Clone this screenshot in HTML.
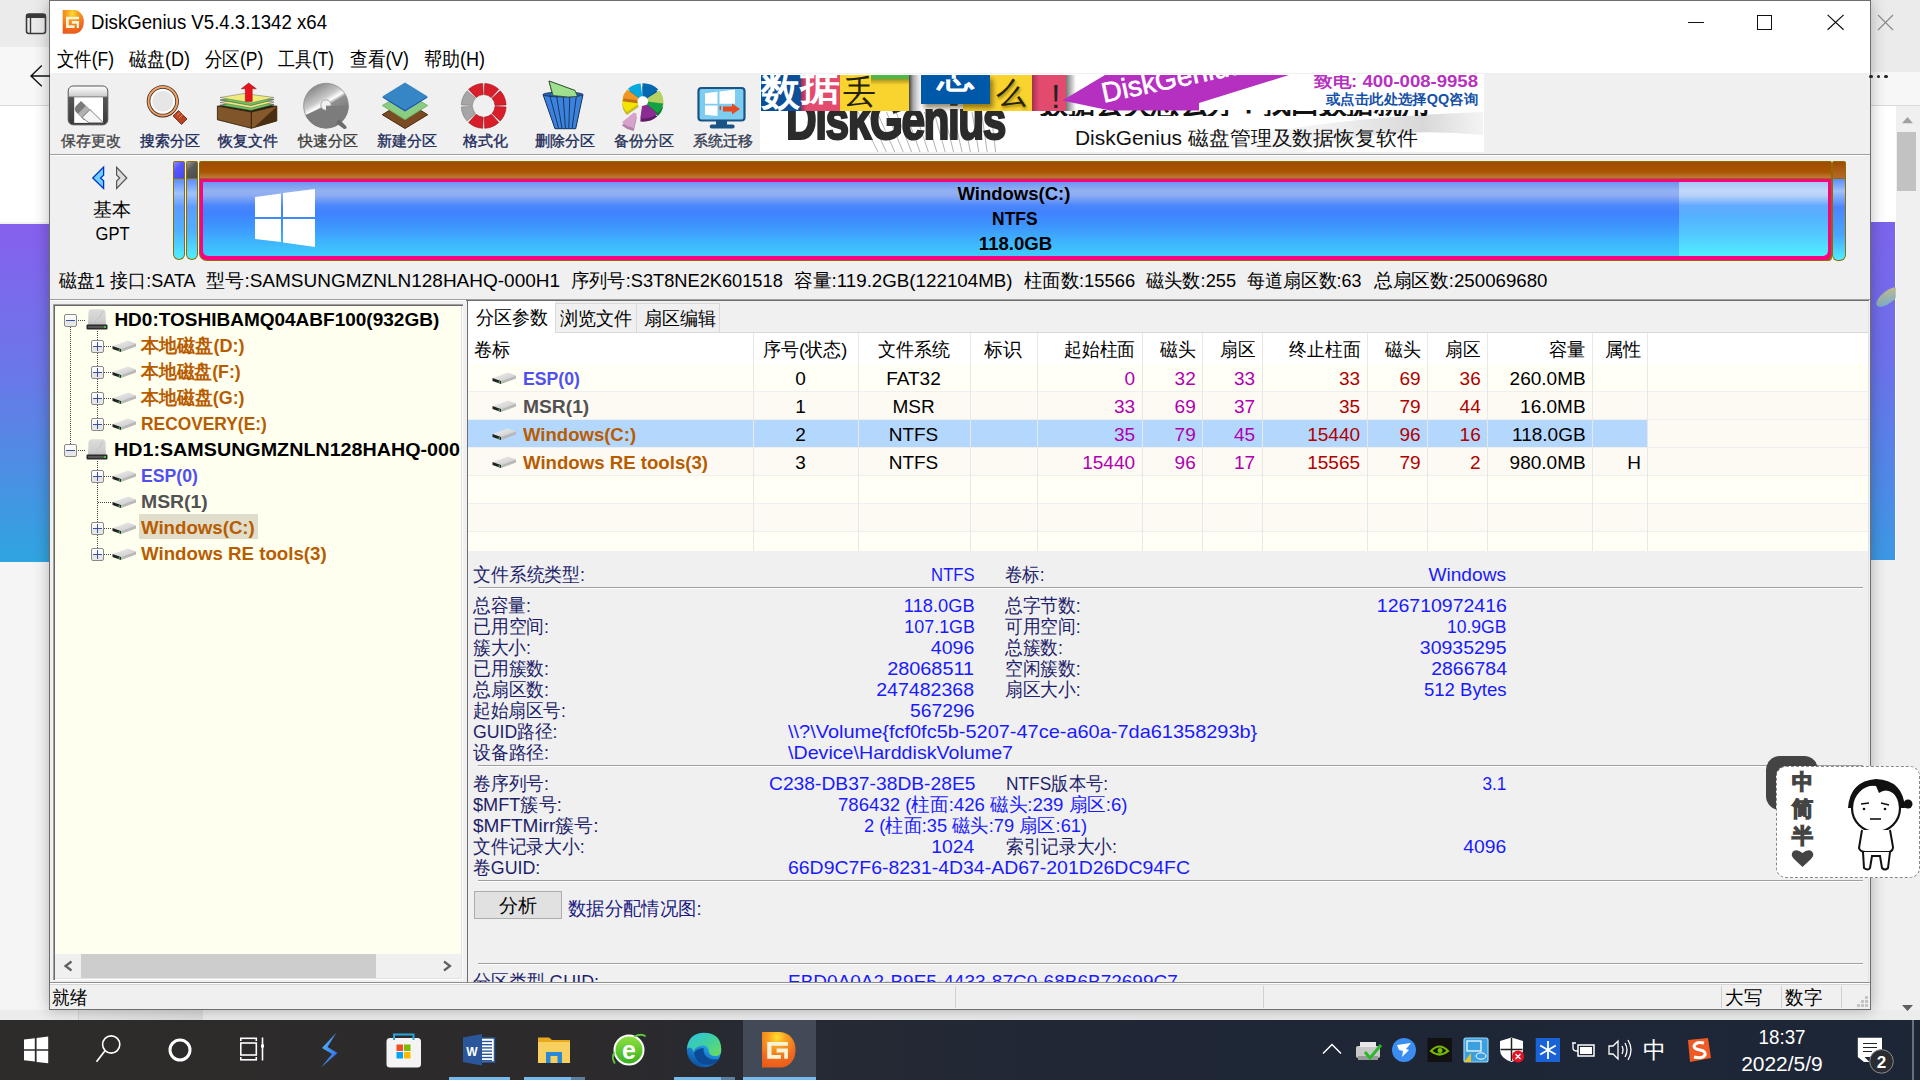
<!DOCTYPE html>
<html><head><meta charset="utf-8"><style>
html,body{margin:0;padding:0;width:1920px;height:1080px;overflow:hidden;background:#f3f3f3;font-family:'Liberation Sans', sans-serif;}
body div, body span, body svg{position:absolute;}
span{white-space:nowrap;display:block;}
</style></head><body>
<div style="left:0px;top:0px;width:49px;height:47px;background:#ebebeb"></div>
<div style="left:0px;top:47px;width:49px;height:58px;background:#f7f7f7"></div>
<div style="left:0px;top:105px;width:49px;height:1px;background:#d9d9d9"></div>
<div style="left:0px;top:106px;width:49px;height:116px;background:#ffffff"></div>
<div style="left:0px;top:224px;width:49px;height:338px;background:linear-gradient(180deg,#8660ee 0%,#6a78e8 45%,#2fa5e0 100%)"></div>
<div style="left:0px;top:563px;width:49px;height:457px;background:#f5f5f5"></div>
<div style="left:1870px;top:0px;width:50px;height:72px;background:#ebebeb"></div>
<div style="left:1870px;top:72px;width:50px;height:33px;background:#f7f7f7"></div>
<div style="left:1870px;top:105px;width:50px;height:1px;background:#d9d9d9"></div>
<div style="left:1870px;top:106px;width:50px;height:914px;background:#ffffff"></div>
<div style="left:1870px;top:222px;width:25px;height:338px;background:linear-gradient(180deg,#7c64ec 0%,#6d70ea 40%,#3c98e4 100%)"></div>
<div style="left:1896px;top:106px;width:24px;height:914px;background:#f0f0f0"></div>
<svg style="left:1870px;top:275px" width="26" height="40" viewBox="1870 275 26 40"><defs><linearGradient id="blob" x1="0" y1="1" x2="1" y2="0"><stop offset="0" stop-color="#70b8d0"/><stop offset="1" stop-color="#d8c870"/></linearGradient></defs><ellipse cx="1888" cy="297" rx="14" ry="6" transform="rotate(-38 1888 297)" fill="url(#blob)" opacity="0.85"/></svg>
<div style="left:1897px;top:132px;width:19px;height:59px;background:#c2c2c2"></div>
<div style="left:1870px;top:560px;width:26px;height:460px;background:#f0f0f0"></div>
<div style="left:0px;top:1010px;width:1920px;height:10px;background:#ececec"></div>
<div style="left:78px;top:1010px;width:1px;height:10px;background:#d4d4d4"></div>
<div style="left:79px;top:1010px;width:124px;height:10px;background:linear-gradient(90deg,#e6e6e6,#dcdcdc)"></div>
<div style="left:49px;top:0px;width:1822px;height:1010px;background:#f0f0f0;border:1px solid #6e6e6e;box-sizing:border-box;box-shadow:0 0 14px rgba(0,0,0,0.28)"></div>
<div style="left:50px;top:1px;width:1820px;height:72px;background:#ffffff"></div>
<div style="left:50px;top:154px;width:1820px;height:1px;background:#a0a0a0"></div>
<div style="left:50px;top:155px;width:1820px;height:1px;background:#ffffff"></div>
<div style="left:50px;top:299px;width:1820px;height:1px;background:#a0a0a0"></div>
<div style="left:50px;top:300px;width:1820px;height:1px;background:#ffffff"></div>
<div style="left:50px;top:982px;width:1820px;height:1px;background:#a0a0a0"></div>
<div style="left:50px;top:983px;width:1820px;height:1px;background:#ffffff"></div>
<div style="left:53px;top:304px;width:410px;height:676px;background:#a0a0a0"></div>
<div style="left:54px;top:305px;width:409px;height:675px;background:#696969"></div>
<div style="left:55px;top:306px;width:408px;height:674px;background:#ffffff"></div>
<div style="left:55px;top:306px;width:407px;height:673px;background:#e3e3e3"></div>
<div style="left:55px;top:306px;width:406px;height:672px;background:#fffff0"></div>
<div style="left:55px;top:954px;width:406px;height:24px;background:#f0f0f0"></div>
<div style="left:81px;top:954px;width:295px;height:24px;background:#cdcdcd"></div>
<div style="left:466px;top:300px;width:1403px;height:682px;background:#6d6d6d"></div>
<div style="left:467px;top:301px;width:1402px;height:681px;background:#f0f0f0"></div>
<div style="left:1868px;top:301px;width:1px;height:681px;background:#e3e3e3"></div>
<div style="left:467px;top:301px;width:1401px;height:32px;background:#f0f0f0"></div>
<div style="left:467px;top:332px;width:1401px;height:1px;background:#d9d9d9"></div>
<div style="left:467px;top:301px;width:88px;height:32px;background:#ffffff"></div>
<div style="left:555px;top:303px;width:82px;height:30px;background:#f0f0f0;border:1px solid #d9d9d9;box-sizing:border-box"></div>
<div style="left:636px;top:303px;width:84px;height:30px;background:#f0f0f0;border:1px solid #d9d9d9;box-sizing:border-box"></div>
<div style="left:467px;top:333px;width:1401px;height:218px;background:#ffffff"></div>
<div style="left:467px;top:364px;width:1401px;height:28px;background:#fffff5"></div>
<div style="left:467px;top:391px;width:1401px;height:1px;background:#efefef"></div>
<div style="left:467px;top:392px;width:1401px;height:28px;background:#fdfaf3"></div>
<div style="left:467px;top:419px;width:1401px;height:1px;background:#efefef"></div>
<div style="left:467px;top:420px;width:1180px;height:28px;background:#b4d7fe"></div>
<div style="left:1647px;top:420px;width:221px;height:28px;background:#fdfaf3"></div>
<div style="left:467px;top:447px;width:1401px;height:1px;background:#efefef"></div>
<div style="left:467px;top:448px;width:1401px;height:28px;background:#fdfaf3"></div>
<div style="left:467px;top:475px;width:1401px;height:1px;background:#efefef"></div>
<div style="left:467px;top:476px;width:1401px;height:28px;background:#fffff5"></div>
<div style="left:467px;top:503px;width:1401px;height:1px;background:#efefef"></div>
<div style="left:467px;top:504px;width:1401px;height:28px;background:#fdfaf3"></div>
<div style="left:467px;top:531px;width:1401px;height:1px;background:#efefef"></div>
<div style="left:467px;top:532px;width:1401px;height:19px;background:#fffff5"></div>
<div style="left:467px;top:559px;width:1401px;height:1px;background:#efefef"></div>
<div style="left:753px;top:333px;width:1px;height:218px;background:#e8e8e8"></div>
<div style="left:858px;top:333px;width:1px;height:218px;background:#e8e8e8"></div>
<div style="left:970px;top:333px;width:1px;height:218px;background:#e8e8e8"></div>
<div style="left:1037px;top:333px;width:1px;height:218px;background:#e8e8e8"></div>
<div style="left:1142px;top:333px;width:1px;height:218px;background:#e8e8e8"></div>
<div style="left:1202px;top:333px;width:1px;height:218px;background:#e8e8e8"></div>
<div style="left:1262px;top:333px;width:1px;height:218px;background:#e8e8e8"></div>
<div style="left:1367px;top:333px;width:1px;height:218px;background:#e8e8e8"></div>
<div style="left:1427px;top:333px;width:1px;height:218px;background:#e8e8e8"></div>
<div style="left:1487px;top:333px;width:1px;height:218px;background:#e8e8e8"></div>
<div style="left:1592px;top:333px;width:1px;height:218px;background:#e8e8e8"></div>
<div style="left:1647px;top:333px;width:1px;height:218px;background:#e8e8e8"></div>
<div style="left:0px;top:1020px;width:1920px;height:60px;background:linear-gradient(90deg,#2e2b2b 0%,#2d2a2b 30%,#262a33 40%,#1f2736 60%,#1d2637 100%)"></div>
<div style="left:743px;top:1020px;width:73px;height:60px;background:#434a57"></div>
<div style="left:449px;top:1077px;width:61px;height:3px;background:#76b9ed"></div>
<div style="left:524px;top:1077px;width:47px;height:3px;background:#76b9ed"></div>
<div style="left:674px;top:1077px;width:47px;height:3px;background:#76b9ed"></div>
<div style="left:743px;top:1077px;width:73px;height:3px;background:#76b9ed"></div>
<div style="left:571px;top:1077px;width:14px;height:3px;background:#5a7fa0"></div>
<div style="left:721px;top:1077px;width:14px;height:3px;background:#5a7fa0"></div>
<div style="left:1912px;top:1020px;width:2px;height:60px;background:#6a707a"></div>
<span style="top:2.0px;height:40px;line-height:40px;font-size:20px;color:#000;font-family:'Liberation Sans', sans-serif;left:91px;transform-origin:0 50%;transform:scaleX(0.9310);">DiskGenius V5.4.3.1342 x64</span>
<span style="top:38.7px;height:40px;line-height:40px;font-size:20px;color:#000;font-family:'Liberation Sans', sans-serif;left:57px;transform-origin:0 50%;transform:scaleX(0.8696);">文件(F)</span>
<span style="top:38.7px;height:40px;line-height:40px;font-size:20px;color:#000;font-family:'Liberation Sans', sans-serif;left:129px;transform-origin:0 50%;transform:scaleX(0.9002);">磁盘(D)</span>
<span style="top:38.7px;height:40px;line-height:40px;font-size:20px;color:#000;font-family:'Liberation Sans', sans-serif;left:204.7px;transform-origin:0 50%;transform:scaleX(0.8744);">分区(P)</span>
<span style="top:38.7px;height:40px;line-height:40px;font-size:20px;color:#000;font-family:'Liberation Sans', sans-serif;left:278px;transform-origin:0 50%;transform:scaleX(0.8544);">工具(T)</span>
<span style="top:38.7px;height:40px;line-height:40px;font-size:20px;color:#000;font-family:'Liberation Sans', sans-serif;left:350px;transform-origin:0 50%;transform:scaleX(0.8849);">查看(V)</span>
<span style="top:38.7px;height:40px;line-height:40px;font-size:20px;color:#000;font-family:'Liberation Sans', sans-serif;left:424px;transform-origin:0 50%;transform:scaleX(0.9002);">帮助(H)</span>
<span style="top:126.0px;height:30px;line-height:30px;font-size:15px;color:#474747;font-family:'Liberation Sans', sans-serif;left:60.8px;transform-origin:50% 50%;-webkit-text-stroke:0.35px #474747;">保存更改</span>
<span style="top:126.0px;height:30px;line-height:30px;font-size:15px;color:#1c2b59;font-family:'Liberation Sans', sans-serif;left:140.0px;transform-origin:50% 50%;-webkit-text-stroke:0.35px #1c2b59;">搜索分区</span>
<span style="top:126.0px;height:30px;line-height:30px;font-size:15px;color:#1c2b59;font-family:'Liberation Sans', sans-serif;left:218.3px;transform-origin:50% 50%;-webkit-text-stroke:0.35px #1c2b59;">恢复文件</span>
<span style="top:126.0px;height:30px;line-height:30px;font-size:15px;color:#3c3c3c;font-family:'Liberation Sans', sans-serif;left:298.0px;transform-origin:50% 50%;-webkit-text-stroke:0.35px #3c3c3c;">快速分区</span>
<span style="top:126.0px;height:30px;line-height:30px;font-size:15px;color:#1c2b59;font-family:'Liberation Sans', sans-serif;left:376.5px;transform-origin:50% 50%;-webkit-text-stroke:0.35px #1c2b59;">新建分区</span>
<span style="top:126.0px;height:30px;line-height:30px;font-size:15px;color:#1c2b59;font-family:'Liberation Sans', sans-serif;left:463.2px;transform-origin:50% 50%;-webkit-text-stroke:0.35px #1c2b59;">格式化</span>
<span style="top:126.0px;height:30px;line-height:30px;font-size:15px;color:#1c2b59;font-family:'Liberation Sans', sans-serif;left:534.6px;transform-origin:50% 50%;-webkit-text-stroke:0.35px #1c2b59;">删除分区</span>
<span style="top:126.0px;height:30px;line-height:30px;font-size:15px;color:#263256;font-family:'Liberation Sans', sans-serif;left:614.0px;transform-origin:50% 50%;-webkit-text-stroke:0.35px #263256;">备份分区</span>
<span style="top:126.0px;height:30px;line-height:30px;font-size:15px;color:#363d52;font-family:'Liberation Sans', sans-serif;left:692.8px;transform-origin:50% 50%;-webkit-text-stroke:0.35px #363d52;">系统迁移</span>
<span style="top:190.5px;height:38px;line-height:38px;font-size:19px;color:#000;font-family:'Liberation Sans', sans-serif;left:93.0px;transform-origin:50% 50%;">基本</span>
<span style="top:214.5px;height:38px;line-height:38px;font-size:19px;color:#000;font-family:'Liberation Sans', sans-serif;left:92.5px;transform-origin:50% 50%;transform:scaleX(0.8704);">GPT</span>
<span style="top:262.0px;height:38px;line-height:38px;font-size:19px;color:#000;font-family:'Liberation Sans', sans-serif;left:58.7px;transform-origin:0 50%;transform:scaleX(0.9490);">磁盘1 接口:SATA</span>
<span style="top:262.0px;height:38px;line-height:38px;font-size:19px;color:#000;font-family:'Liberation Sans', sans-serif;left:206.4px;transform-origin:0 50%;">型号:SAMSUNGMZNLN128HAHQ-000H1</span>
<span style="top:262.0px;height:38px;line-height:38px;font-size:19px;color:#000;font-family:'Liberation Sans', sans-serif;left:570.6px;transform-origin:0 50%;transform:scaleX(0.9595);">序列号:S3T8NE2K601518</span>
<span style="top:262.0px;height:38px;line-height:38px;font-size:19px;color:#000;font-family:'Liberation Sans', sans-serif;left:794px;transform-origin:0 50%;transform:scaleX(0.9872);">容量:119.2GB(122104MB)</span>
<span style="top:262.0px;height:38px;line-height:38px;font-size:19px;color:#000;font-family:'Liberation Sans', sans-serif;left:1023.8px;transform-origin:0 50%;transform:scaleX(0.9650);">柱面数:15566</span>
<span style="top:262.0px;height:38px;line-height:38px;font-size:19px;color:#000;font-family:'Liberation Sans', sans-serif;left:1146px;transform-origin:0 50%;transform:scaleX(0.9576);">磁头数:255</span>
<span style="top:262.0px;height:38px;line-height:38px;font-size:19px;color:#000;font-family:'Liberation Sans', sans-serif;left:1247px;transform-origin:0 50%;transform:scaleX(0.9430);">每道扇区数:63</span>
<span style="top:262.0px;height:38px;line-height:38px;font-size:19px;color:#000;font-family:'Liberation Sans', sans-serif;left:1373.5px;transform-origin:0 50%;transform:scaleX(0.9836);">总扇区数:250069680</span>
<span style="top:300.5px;height:38px;line-height:38px;font-size:19px;color:#000;font-family:'Liberation Sans', sans-serif;font-weight:bold;left:114.4px;transform-origin:0 50%;">HD0:TOSHIBAMQ04ABF100(932GB)</span>
<span style="top:326.5px;height:38px;line-height:38px;font-size:19px;color:#b85c00;font-family:'Liberation Sans', sans-serif;font-weight:bold;left:141px;transform-origin:0 50%;transform:scaleX(0.9531);">本地磁盘(D:)</span>
<span style="top:352.5px;height:38px;line-height:38px;font-size:19px;color:#b85c00;font-family:'Liberation Sans', sans-serif;font-weight:bold;left:141px;transform-origin:0 50%;transform:scaleX(0.9363);">本地磁盘(F:)</span>
<span style="top:378.5px;height:38px;line-height:38px;font-size:19px;color:#b85c00;font-family:'Liberation Sans', sans-serif;font-weight:bold;left:141px;transform-origin:0 50%;transform:scaleX(0.9438);">本地磁盘(G:)</span>
<span style="top:404.5px;height:38px;line-height:38px;font-size:19px;color:#b85c00;font-family:'Liberation Sans', sans-serif;font-weight:bold;left:141px;transform-origin:0 50%;transform:scaleX(0.9143);">RECOVERY(E:)</span>
<span style="top:430.5px;height:38px;line-height:38px;font-size:19px;color:#000;font-family:'Liberation Sans', sans-serif;font-weight:bold;left:114.4px;transform-origin:0 50%;transform:scaleX(1.0371);">HD1:SAMSUNGMZNLN128HAHQ-000</span>
<div style="left:461px;top:306px;width:5px;height:648px;background:#f0f0f0"></div>
<div style="left:461px;top:306px;width:1px;height:673px;background:#e3e3e3"></div>
<div style="left:462px;top:306px;width:1px;height:674px;background:#ffffff"></div>
<div style="left:463px;top:301px;width:4px;height:681px;background:#f0f0f0"></div>
<div style="left:467px;top:300px;width:1px;height:682px;background:#6d6d6d"></div>
<div style="left:1870px;top:300px;width:1px;height:20px;background:transparent"></div>
<div style="left:139px;top:514px;width:119px;height:25px;background:#e1ddcb"></div>
<span style="top:456.5px;height:38px;line-height:38px;font-size:19px;color:#5050f0;font-family:'Liberation Sans', sans-serif;font-weight:bold;left:141px;transform-origin:0 50%;transform:scaleX(0.9290);">ESP(0)</span>
<span style="top:482.5px;height:38px;line-height:38px;font-size:19px;color:#525252;font-family:'Liberation Sans', sans-serif;font-weight:bold;left:141px;transform-origin:0 50%;transform:scaleX(1.0206);">MSR(1)</span>
<span style="top:508.5px;height:38px;line-height:38px;font-size:19px;color:#b85c00;font-family:'Liberation Sans', sans-serif;font-weight:bold;left:141px;transform-origin:0 50%;transform:scaleX(0.9817);">Windows(C:)</span>
<span style="top:534.5px;height:38px;line-height:38px;font-size:19px;color:#b85c00;font-family:'Liberation Sans', sans-serif;font-weight:bold;left:141px;transform-origin:0 50%;transform:scaleX(0.9837);">Windows RE tools(3)</span>
<span style="top:298.5px;height:38px;line-height:38px;font-size:19px;color:#000;font-family:'Liberation Sans', sans-serif;left:476px;transform-origin:0 50%;transform:scaleX(0.9474);">分区参数</span>
<span style="top:299.5px;height:38px;line-height:38px;font-size:19px;color:#000;font-family:'Liberation Sans', sans-serif;left:559.5px;transform-origin:0 50%;transform:scaleX(0.9526);">浏览文件</span>
<span style="top:299.5px;height:38px;line-height:38px;font-size:19px;color:#000;font-family:'Liberation Sans', sans-serif;left:643.9px;transform-origin:0 50%;transform:scaleX(0.9474);">扇区编辑</span>
<span style="top:331.0px;height:38px;line-height:38px;font-size:19px;color:#000;font-family:'Liberation Sans', sans-serif;left:473.6px;transform-origin:0 50%;transform:scaleX(0.9579);">卷标</span>
<span style="top:331.0px;height:38px;line-height:38px;font-size:19px;color:#000;font-family:'Liberation Sans', sans-serif;left:762.5px;transform-origin:0 50%;transform:scaleX(0.9497);">序号(状态)</span>
<span style="top:331.0px;height:38px;line-height:38px;font-size:19px;color:#000;font-family:'Liberation Sans', sans-serif;left:877.5px;transform-origin:0 50%;transform:scaleX(0.9500);">文件系统</span>
<span style="top:331.0px;height:38px;line-height:38px;font-size:19px;color:#000;font-family:'Liberation Sans', sans-serif;left:984px;transform-origin:0 50%;transform:scaleX(0.9921);">标识</span>
<span style="top:331.0px;height:38px;line-height:38px;font-size:19px;color:#000;font-family:'Liberation Sans', sans-serif;left:1063.9px;transform-origin:0 50%;transform:scaleX(0.9355);">起始柱面</span>
<span style="top:331.0px;height:38px;line-height:38px;font-size:19px;color:#000;font-family:'Liberation Sans', sans-serif;left:1160px;transform-origin:0 50%;transform:scaleX(0.9395);">磁头</span>
<span style="top:331.0px;height:38px;line-height:38px;font-size:19px;color:#000;font-family:'Liberation Sans', sans-serif;left:1219.8px;transform-origin:0 50%;transform:scaleX(0.9263);">扇区</span>
<span style="top:331.0px;height:38px;line-height:38px;font-size:19px;color:#000;font-family:'Liberation Sans', sans-serif;left:1288.5px;transform-origin:0 50%;transform:scaleX(0.9395);">终止柱面</span>
<span style="top:331.0px;height:38px;line-height:38px;font-size:19px;color:#000;font-family:'Liberation Sans', sans-serif;left:1385px;transform-origin:0 50%;transform:scaleX(0.9395);">磁头</span>
<span style="top:331.0px;height:38px;line-height:38px;font-size:19px;color:#000;font-family:'Liberation Sans', sans-serif;left:1444.8px;transform-origin:0 50%;transform:scaleX(0.9263);">扇区</span>
<span style="top:331.0px;height:38px;line-height:38px;font-size:19px;color:#000;font-family:'Liberation Sans', sans-serif;left:1548.9px;transform-origin:0 50%;transform:scaleX(0.9658);">容量</span>
<span style="top:331.0px;height:38px;line-height:38px;font-size:19px;color:#000;font-family:'Liberation Sans', sans-serif;left:1604.6px;transform-origin:0 50%;transform:scaleX(0.9579);">属性</span>
<span style="top:359.5px;height:38px;line-height:38px;font-size:19px;color:#5050f0;font-family:'Liberation Sans', sans-serif;font-weight:bold;left:522.5px;transform-origin:0 50%;transform:scaleX(0.9290);">ESP(0)</span>
<span style="top:359.5px;height:38px;line-height:38px;font-size:19px;color:#000;font-family:'Liberation Sans', sans-serif;left:795.2px;transform-origin:50% 50%;">0</span>
<span style="top:359.5px;height:38px;line-height:38px;font-size:19px;color:#000;font-family:'Liberation Sans', sans-serif;left:886.2px;transform-origin:50% 50%;">FAT32</span>
<span style="top:359.5px;height:38px;line-height:38px;font-size:19px;color:#b000b0;font-family:'Liberation Sans', sans-serif;left:1124.4px;transform-origin:100% 50%;">0</span>
<span style="top:359.5px;height:38px;line-height:38px;font-size:19px;color:#b000b0;font-family:'Liberation Sans', sans-serif;left:1174.6px;transform-origin:100% 50%;">32</span>
<span style="top:359.5px;height:38px;line-height:38px;font-size:19px;color:#b000b0;font-family:'Liberation Sans', sans-serif;left:1233.9px;transform-origin:100% 50%;">33</span>
<span style="top:359.5px;height:38px;line-height:38px;font-size:19px;color:#b00000;font-family:'Liberation Sans', sans-serif;left:1338.9px;transform-origin:100% 50%;">33</span>
<span style="top:359.5px;height:38px;line-height:38px;font-size:19px;color:#b00000;font-family:'Liberation Sans', sans-serif;left:1399.4px;transform-origin:100% 50%;">69</span>
<span style="top:359.5px;height:38px;line-height:38px;font-size:19px;color:#b00000;font-family:'Liberation Sans', sans-serif;left:1459.6px;transform-origin:100% 50%;">36</span>
<span style="top:359.5px;height:38px;line-height:38px;font-size:19px;color:#000;font-family:'Liberation Sans', sans-serif;left:1509.6px;transform-origin:100% 50%;">260.0MB</span>
<span style="top:387.5px;height:38px;line-height:38px;font-size:19px;color:#525252;font-family:'Liberation Sans', sans-serif;font-weight:bold;left:522.5px;transform-origin:0 50%;transform:scaleX(1.0122);">MSR(1)</span>
<span style="top:387.5px;height:38px;line-height:38px;font-size:19px;color:#000;font-family:'Liberation Sans', sans-serif;left:795.2px;transform-origin:50% 50%;">1</span>
<span style="top:387.5px;height:38px;line-height:38px;font-size:19px;color:#000;font-family:'Liberation Sans', sans-serif;left:892.4px;transform-origin:50% 50%;">MSR</span>
<span style="top:387.5px;height:38px;line-height:38px;font-size:19px;color:#b000b0;font-family:'Liberation Sans', sans-serif;left:1113.9px;transform-origin:100% 50%;">33</span>
<span style="top:387.5px;height:38px;line-height:38px;font-size:19px;color:#b000b0;font-family:'Liberation Sans', sans-serif;left:1174.6px;transform-origin:100% 50%;">69</span>
<span style="top:387.5px;height:38px;line-height:38px;font-size:19px;color:#b000b0;font-family:'Liberation Sans', sans-serif;left:1233.9px;transform-origin:100% 50%;">37</span>
<span style="top:387.5px;height:38px;line-height:38px;font-size:19px;color:#b00000;font-family:'Liberation Sans', sans-serif;left:1338.9px;transform-origin:100% 50%;">35</span>
<span style="top:387.5px;height:38px;line-height:38px;font-size:19px;color:#b00000;font-family:'Liberation Sans', sans-serif;left:1399.4px;transform-origin:100% 50%;">79</span>
<span style="top:387.5px;height:38px;line-height:38px;font-size:19px;color:#b00000;font-family:'Liberation Sans', sans-serif;left:1459.6px;transform-origin:100% 50%;">44</span>
<span style="top:387.5px;height:38px;line-height:38px;font-size:19px;color:#000;font-family:'Liberation Sans', sans-serif;left:1520.1px;transform-origin:100% 50%;">16.0MB</span>
<span style="top:415.5px;height:38px;line-height:38px;font-size:19px;color:#b85c00;font-family:'Liberation Sans', sans-serif;font-weight:bold;left:522.5px;transform-origin:0 50%;transform:scaleX(0.9757);">Windows(C:)</span>
<span style="top:415.5px;height:38px;line-height:38px;font-size:19px;color:#000;font-family:'Liberation Sans', sans-serif;left:795.2px;transform-origin:50% 50%;">2</span>
<span style="top:415.5px;height:38px;line-height:38px;font-size:19px;color:#000;font-family:'Liberation Sans', sans-serif;left:888.7px;transform-origin:50% 50%;">NTFS</span>
<span style="top:415.5px;height:38px;line-height:38px;font-size:19px;color:#b000b0;font-family:'Liberation Sans', sans-serif;left:1113.9px;transform-origin:100% 50%;">35</span>
<span style="top:415.5px;height:38px;line-height:38px;font-size:19px;color:#b000b0;font-family:'Liberation Sans', sans-serif;left:1174.6px;transform-origin:100% 50%;">79</span>
<span style="top:415.5px;height:38px;line-height:38px;font-size:19px;color:#b000b0;font-family:'Liberation Sans', sans-serif;left:1233.9px;transform-origin:100% 50%;">45</span>
<span style="top:415.5px;height:38px;line-height:38px;font-size:19px;color:#b00000;font-family:'Liberation Sans', sans-serif;left:1307.2px;transform-origin:100% 50%;">15440</span>
<span style="top:415.5px;height:38px;line-height:38px;font-size:19px;color:#b00000;font-family:'Liberation Sans', sans-serif;left:1399.4px;transform-origin:100% 50%;">96</span>
<span style="top:415.5px;height:38px;line-height:38px;font-size:19px;color:#b00000;font-family:'Liberation Sans', sans-serif;left:1459.6px;transform-origin:100% 50%;">16</span>
<span style="top:415.5px;height:38px;line-height:38px;font-size:19px;color:#000;font-family:'Liberation Sans', sans-serif;left:1512.0px;transform-origin:100% 50%;">118.0GB</span>
<span style="top:443.5px;height:38px;line-height:38px;font-size:19px;color:#b85c00;font-family:'Liberation Sans', sans-serif;font-weight:bold;left:522.5px;transform-origin:0 50%;transform:scaleX(0.9800);">Windows RE tools(3)</span>
<span style="top:443.5px;height:38px;line-height:38px;font-size:19px;color:#000;font-family:'Liberation Sans', sans-serif;left:795.2px;transform-origin:50% 50%;">3</span>
<span style="top:443.5px;height:38px;line-height:38px;font-size:19px;color:#000;font-family:'Liberation Sans', sans-serif;left:888.7px;transform-origin:50% 50%;">NTFS</span>
<span style="top:443.5px;height:38px;line-height:38px;font-size:19px;color:#b000b0;font-family:'Liberation Sans', sans-serif;left:1082.2px;transform-origin:100% 50%;">15440</span>
<span style="top:443.5px;height:38px;line-height:38px;font-size:19px;color:#b000b0;font-family:'Liberation Sans', sans-serif;left:1174.6px;transform-origin:100% 50%;">96</span>
<span style="top:443.5px;height:38px;line-height:38px;font-size:19px;color:#b000b0;font-family:'Liberation Sans', sans-serif;left:1233.9px;transform-origin:100% 50%;">17</span>
<span style="top:443.5px;height:38px;line-height:38px;font-size:19px;color:#b00000;font-family:'Liberation Sans', sans-serif;left:1307.2px;transform-origin:100% 50%;">15565</span>
<span style="top:443.5px;height:38px;line-height:38px;font-size:19px;color:#b00000;font-family:'Liberation Sans', sans-serif;left:1399.4px;transform-origin:100% 50%;">79</span>
<span style="top:443.5px;height:38px;line-height:38px;font-size:19px;color:#b00000;font-family:'Liberation Sans', sans-serif;left:1470.1px;transform-origin:100% 50%;">2</span>
<span style="top:443.5px;height:38px;line-height:38px;font-size:19px;color:#000;font-family:'Liberation Sans', sans-serif;left:1509.6px;transform-origin:100% 50%;">980.0MB</span>
<span style="top:443.5px;height:38px;line-height:38px;font-size:19px;color:#000;font-family:'Liberation Sans', sans-serif;left:1627.3px;transform-origin:100% 50%;">H</span>
<div style="left:478px;top:587px;width:1385px;height:1px;background:#a0a0a0"></div>
<div style="left:478px;top:588px;width:1385px;height:1px;background:#ffffff"></div>
<div style="left:478px;top:765px;width:1385px;height:1px;background:#a0a0a0"></div>
<div style="left:478px;top:766px;width:1385px;height:1px;background:#ffffff"></div>
<div style="left:478px;top:880px;width:1385px;height:1px;background:#a0a0a0"></div>
<div style="left:478px;top:881px;width:1385px;height:1px;background:#ffffff"></div>
<div style="left:478px;top:963px;width:1385px;height:1px;background:#a0a0a0"></div>
<div style="left:478px;top:964px;width:1385px;height:1px;background:#ffffff"></div>
<span style="top:555.5px;height:38px;line-height:38px;font-size:19px;color:#1e1e6a;font-family:'Liberation Sans', sans-serif;left:473px;transform-origin:0 50%;transform:scaleX(0.9390);">文件系统类型:</span>
<span style="top:555.5px;height:38px;line-height:38px;font-size:19px;color:#1a1aff;font-family:'Liberation Sans', sans-serif;left:924.9px;transform-origin:100% 50%;transform:scaleX(0.8769);">NTFS</span>
<span style="top:555.5px;height:38px;line-height:38px;font-size:19px;color:#1e1e6a;font-family:'Liberation Sans', sans-serif;left:1005px;transform-origin:0 50%;transform:scaleX(0.9173);">卷标:</span>
<span style="top:555.5px;height:38px;line-height:38px;font-size:19px;color:#1a1aff;font-family:'Liberation Sans', sans-serif;left:1429.4px;transform-origin:100% 50%;transform:scaleX(1.0081);">Windows</span>
<span style="top:587.0px;height:38px;line-height:38px;font-size:19px;color:#1e1e6a;font-family:'Liberation Sans', sans-serif;left:473px;transform-origin:0 50%;transform:scaleX(0.9313);">总容量:</span>
<span style="top:587.0px;height:38px;line-height:38px;font-size:19px;color:#1a1aff;font-family:'Liberation Sans', sans-serif;left:900.9px;transform-origin:100% 50%;transform:scaleX(0.9614);">118.0GB</span>
<span style="top:608.0px;height:38px;line-height:38px;font-size:19px;color:#1e1e6a;font-family:'Liberation Sans', sans-serif;left:473px;transform-origin:0 50%;transform:scaleX(0.9350);">已用空间:</span>
<span style="top:608.0px;height:38px;line-height:38px;font-size:19px;color:#1a1aff;font-family:'Liberation Sans', sans-serif;left:899.5px;transform-origin:100% 50%;transform:scaleX(0.9433);">107.1GB</span>
<span style="top:629.0px;height:38px;line-height:38px;font-size:19px;color:#1e1e6a;font-family:'Liberation Sans', sans-serif;left:473px;transform-origin:0 50%;transform:scaleX(0.9313);">簇大小:</span>
<span style="top:629.0px;height:38px;line-height:38px;font-size:19px;color:#1a1aff;font-family:'Liberation Sans', sans-serif;left:932.2px;transform-origin:100% 50%;transform:scaleX(1.0288);">4096</span>
<span style="top:650.0px;height:38px;line-height:38px;font-size:19px;color:#1e1e6a;font-family:'Liberation Sans', sans-serif;left:473px;transform-origin:0 50%;transform:scaleX(0.9350);">已用簇数:</span>
<span style="top:650.0px;height:38px;line-height:38px;font-size:19px;color:#1a1aff;font-family:'Liberation Sans', sans-serif;left:891.4px;transform-origin:100% 50%;transform:scaleX(1.0466);">28068511</span>
<span style="top:671.0px;height:38px;line-height:38px;font-size:19px;color:#1e1e6a;font-family:'Liberation Sans', sans-serif;left:473px;transform-origin:0 50%;transform:scaleX(0.9350);">总扇区数:</span>
<span style="top:671.0px;height:38px;line-height:38px;font-size:19px;color:#1a1aff;font-family:'Liberation Sans', sans-serif;left:879.4px;transform-origin:100% 50%;transform:scaleX(1.0293);">247482368</span>
<span style="top:692.0px;height:38px;line-height:38px;font-size:19px;color:#1e1e6a;font-family:'Liberation Sans', sans-serif;left:473px;transform-origin:0 50%;transform:scaleX(0.9274);">起始扇区号:</span>
<span style="top:692.0px;height:38px;line-height:38px;font-size:19px;color:#1a1aff;font-family:'Liberation Sans', sans-serif;left:911.1px;transform-origin:100% 50%;transform:scaleX(1.0172);">567296</span>
<span style="top:587.0px;height:38px;line-height:38px;font-size:19px;color:#1e1e6a;font-family:'Liberation Sans', sans-serif;left:1005px;transform-origin:0 50%;transform:scaleX(0.9313);">总字节数:</span>
<span style="top:587.0px;height:38px;line-height:38px;font-size:19px;color:#1a1aff;font-family:'Liberation Sans', sans-serif;left:1379.7px;transform-origin:100% 50%;transform:scaleX(1.0251);">126710972416</span>
<span style="top:608.0px;height:38px;line-height:38px;font-size:19px;color:#1e1e6a;font-family:'Liberation Sans', sans-serif;left:1005px;transform-origin:0 50%;transform:scaleX(0.9313);">可用空间:</span>
<span style="top:608.0px;height:38px;line-height:38px;font-size:19px;color:#1a1aff;font-family:'Liberation Sans', sans-serif;left:1442.1px;transform-origin:100% 50%;transform:scaleX(0.9234);">10.9GB</span>
<span style="top:629.0px;height:38px;line-height:38px;font-size:19px;color:#1e1e6a;font-family:'Liberation Sans', sans-serif;left:1005px;transform-origin:0 50%;transform:scaleX(0.9280);">总簇数:</span>
<span style="top:629.0px;height:38px;line-height:38px;font-size:19px;color:#1a1aff;font-family:'Liberation Sans', sans-serif;left:1422.0px;transform-origin:100% 50%;transform:scaleX(1.0255);">30935295</span>
<span style="top:650.0px;height:38px;line-height:38px;font-size:19px;color:#1e1e6a;font-family:'Liberation Sans', sans-serif;left:1005px;transform-origin:0 50%;transform:scaleX(0.9313);">空闲簇数:</span>
<span style="top:650.0px;height:38px;line-height:38px;font-size:19px;color:#1a1aff;font-family:'Liberation Sans', sans-serif;left:1432.5px;transform-origin:100% 50%;transform:scaleX(1.0248);">2866784</span>
<span style="top:671.0px;height:38px;line-height:38px;font-size:19px;color:#1e1e6a;font-family:'Liberation Sans', sans-serif;left:1005px;transform-origin:0 50%;transform:scaleX(0.9313);">扇区大小:</span>
<span style="top:671.0px;height:38px;line-height:38px;font-size:19px;color:#1a1aff;font-family:'Liberation Sans', sans-serif;left:1422.0px;transform-origin:100% 50%;transform:scaleX(0.9775);">512 Bytes</span>
<span style="top:712.5px;height:38px;line-height:38px;font-size:19px;color:#1e1e6a;font-family:'Liberation Sans', sans-serif;left:473px;transform-origin:0 50%;transform:scaleX(0.9308);">GUID路径:</span>
<span style="top:712.5px;height:38px;line-height:38px;font-size:19px;color:#1a1aff;font-family:'Liberation Sans', sans-serif;left:788px;transform-origin:0 50%;transform:scaleX(1.0502);">\\?\Volume{fcf0fc5b-5207-47ce-a60a-7da61358293b}</span>
<span style="top:733.5px;height:38px;line-height:38px;font-size:19px;color:#1e1e6a;font-family:'Liberation Sans', sans-serif;left:473px;transform-origin:0 50%;transform:scaleX(0.9350);">设备路径:</span>
<span style="top:733.5px;height:38px;line-height:38px;font-size:19px;color:#1a1aff;font-family:'Liberation Sans', sans-serif;left:788px;transform-origin:0 50%;transform:scaleX(1.0343);">\Device\HarddiskVolume7</span>
<span style="top:765.0px;height:38px;line-height:38px;font-size:19px;color:#1e1e6a;font-family:'Liberation Sans', sans-serif;left:473px;transform-origin:0 50%;transform:scaleX(0.9350);">卷序列号:</span>
<span style="top:765.0px;height:38px;line-height:38px;font-size:19px;color:#1a1aff;font-family:'Liberation Sans', sans-serif;left:768.5px;transform-origin:0 50%;transform:scaleX(1.0130);">C238-DB37-38DB-28E5</span>
<span style="top:765.0px;height:38px;line-height:38px;font-size:19px;color:#1e1e6a;font-family:'Liberation Sans', sans-serif;left:1006px;transform-origin:0 50%;transform:scaleX(0.9116);">NTFS版本号:</span>
<span style="top:765.0px;height:38px;line-height:38px;font-size:19px;color:#1a1aff;font-family:'Liberation Sans', sans-serif;left:1480.1px;transform-origin:100% 50%;transform:scaleX(0.9083);">3.1</span>
<span style="top:786.0px;height:38px;line-height:38px;font-size:19px;color:#1e1e6a;font-family:'Liberation Sans', sans-serif;left:473px;transform-origin:0 50%;transform:scaleX(0.9549);">$MFT簇号:</span>
<span style="top:786.0px;height:38px;line-height:38px;font-size:19px;color:#1a1aff;font-family:'Liberation Sans', sans-serif;left:838px;transform-origin:0 50%;transform:scaleX(0.9790);">786432 (柱面:426 磁头:239 扇区:6)</span>
<span style="top:806.5px;height:38px;line-height:38px;font-size:19px;color:#1e1e6a;font-family:'Liberation Sans', sans-serif;left:473px;transform-origin:0 50%;">$MFTMirr簇号:</span>
<span style="top:806.5px;height:38px;line-height:38px;font-size:19px;color:#1a1aff;font-family:'Liberation Sans', sans-serif;left:864px;transform-origin:0 50%;transform:scaleX(0.9600);">2 (柱面:35 磁头:79 扇区:61)</span>
<span style="top:827.5px;height:38px;line-height:38px;font-size:19px;color:#1e1e6a;font-family:'Liberation Sans', sans-serif;left:473px;transform-origin:0 50%;transform:scaleX(0.9373);">文件记录大小:</span>
<span style="top:827.5px;height:38px;line-height:38px;font-size:19px;color:#1a1aff;font-family:'Liberation Sans', sans-serif;left:932.2px;transform-origin:100% 50%;transform:scaleX(1.0170);">1024</span>
<span style="top:827.5px;height:38px;line-height:38px;font-size:19px;color:#1e1e6a;font-family:'Liberation Sans', sans-serif;left:1006px;transform-origin:0 50%;transform:scaleX(0.9306);">索引记录大小:</span>
<span style="top:827.5px;height:38px;line-height:38px;font-size:19px;color:#1a1aff;font-family:'Liberation Sans', sans-serif;left:1464.2px;transform-origin:100% 50%;transform:scaleX(1.0170);">4096</span>
<span style="top:848.5px;height:38px;line-height:38px;font-size:19px;color:#1e1e6a;font-family:'Liberation Sans', sans-serif;left:473px;transform-origin:0 50%;transform:scaleX(0.9376);">卷GUID:</span>
<span style="top:848.5px;height:38px;line-height:38px;font-size:19px;color:#1a1aff;font-family:'Liberation Sans', sans-serif;left:788px;transform-origin:0 50%;transform:scaleX(1.0232);">66D9C7F6-8231-4D34-AD67-201D26DC94FC</span>
<div style="left:474px;top:891px;width:88px;height:28px;background:#e1e1e1;border:1px solid #adadad;box-sizing:border-box"></div>
<span style="top:886.5px;height:38px;line-height:38px;font-size:19px;color:#000;font-family:'Liberation Sans', sans-serif;left:499.0px;transform-origin:50% 50%;">分析</span>
<span style="top:890.0px;height:38px;line-height:38px;font-size:19px;color:#1a1a80;font-family:'Liberation Sans', sans-serif;left:568px;transform-origin:0 50%;transform:scaleX(0.9654);">数据分配情况图:</span>
<span style="top:962.5px;height:38px;line-height:38px;font-size:19px;color:#1e1e6a;font-family:'Liberation Sans', sans-serif;left:473px;transform-origin:0 50%;transform:scaleX(0.9399);">分区类型 GUID:</span>
<span style="top:962.5px;height:38px;line-height:38px;font-size:19px;color:#1a1aff;font-family:'Liberation Sans', sans-serif;left:788px;transform-origin:0 50%;">EBD0A0A2-B9E5-4433-87C0-68B6B72699C7</span>
<div style="left:50px;top:982px;width:1820px;height:1px;background:#8e8e8e"></div>
<div style="left:50px;top:983px;width:1820px;height:1px;background:#ffffff"></div>
<div style="left:50px;top:984px;width:1819px;height:1px;background:#d6d6d6"></div>
<div style="left:50px;top:985px;width:1819px;height:24px;background:#f0f0f0"></div>
<div style="left:955px;top:986px;width:1px;height:22px;background:#d0d0d0"></div>
<div style="left:1263px;top:986px;width:1px;height:22px;background:#d0d0d0"></div>
<div style="left:1721px;top:986px;width:1px;height:22px;background:#d0d0d0"></div>
<div style="left:1781px;top:986px;width:1px;height:22px;background:#d0d0d0"></div>
<div style="left:1841px;top:986px;width:1px;height:22px;background:#d0d0d0"></div>
<span style="top:978.5px;height:38px;line-height:38px;font-size:19px;color:#000;font-family:'Liberation Sans', sans-serif;left:52px;transform-origin:0 50%;transform:scaleX(0.9211);">就绪</span>
<span style="top:978.5px;height:38px;line-height:38px;font-size:19px;color:#000;font-family:'Liberation Sans', sans-serif;left:1725px;transform-origin:0 50%;transform:scaleX(0.9737);">大写</span>
<span style="top:978.5px;height:38px;line-height:38px;font-size:19px;color:#000;font-family:'Liberation Sans', sans-serif;left:1785px;transform-origin:0 50%;transform:scaleX(0.9737);">数字</span>
<span style="top:1016.5px;height:40px;line-height:40px;font-size:20px;color:#ffffff;font-family:'Liberation Sans', sans-serif;left:1756.5px;transform-origin:50% 50%;transform:scaleX(0.9388);">18:37</span>
<span style="top:1044.0px;height:40px;line-height:40px;font-size:20px;color:#ffffff;font-family:'Liberation Sans', sans-serif;left:1742.6px;transform-origin:50% 50%;transform:scaleX(1.0468);">2022/5/9</span>
<div style="left:173px;top:161px;width:12px;height:99px;background:#8c6e00;border-radius:2px 2px 6px 6px"></div>
<div style="left:174px;top:162px;width:10px;height:16px;background:linear-gradient(135deg,#8a8aff 0%,#5555ff 40%,#4a4ae8 100%)"></div>
<div style="left:174px;top:179px;width:10px;height:80px;background:linear-gradient(180deg,#5a8cff 0%,#9fc2fa 18%,#5c9cff 35%,#4fb0ff 65%,#50f0ff 100%);border-radius:0 0 5px 5px"></div>
<div style="left:186px;top:161px;width:12px;height:99px;background:#8c6e00;border-radius:2px 2px 6px 6px"></div>
<div style="left:187px;top:162px;width:10px;height:16px;background:linear-gradient(135deg,#9a9a9a 0%,#5a5a5a 40%,#484c55 100%)"></div>
<div style="left:187px;top:179px;width:10px;height:80px;background:linear-gradient(180deg,#5a8cff 0%,#9fc2fa 18%,#5c9cff 35%,#4fb0ff 65%,#50f0ff 100%);border-radius:0 0 5px 5px"></div>
<div style="left:199px;top:161px;width:1633px;height:100px;background:#8c6e00;border-radius:2px 2px 4px 8px"></div>
<div style="left:200px;top:162px;width:1631px;height:16px;background:linear-gradient(180deg,#a04c00 0%,#a85400 60%,#c07a3a 100%)"></div>
<div style="left:200px;top:179px;width:1631px;height:81px;background:#ff0080;border-radius:0 0 6px 7px"></div>
<div style="left:203px;top:182px;width:1476px;height:74px;background:linear-gradient(180deg,#6d94f2 0%,#92b2f1 12%,#8eacf2 18%,#4c86fc 32%,#3f82fe 42%,#3e98fd 62%,#3eb6fd 82%,#40cafd 100%);border-radius:0 0 0 5px"></div>
<div style="left:1679px;top:182px;width:149px;height:74px;background:linear-gradient(180deg,#a9c6f6 0%,#c0d8f8 12%,#b8d2f8 18%,#64aafe 32%,#55b0ff 45%,#52c8ff 70%,#50eeff 100%);border-radius:0 0 5px 0"></div>
<div style="left:1832px;top:161px;width:14px;height:100px;background:#8c6e00;border-radius:2px 2px 6px 6px"></div>
<div style="left:1833px;top:162px;width:12px;height:16px;background:linear-gradient(180deg,#a04c00,#b8692a)"></div>
<div style="left:1833px;top:179px;width:12px;height:81px;background:linear-gradient(180deg,#5a8cff 0%,#9fc2fa 15%,#4b84fe 35%,#46a8ff 70%,#50eeff 100%);border-radius:0 0 5px 5px"></div>
<svg style="left:250px;top:185px" width="70" height="66" viewBox="250 185 70 66"><g fill="#ffffff"><polygon points="255,197 281,193.5 281,217 255,217"/><polygon points="283,193 315,189 315,217 283,217"/><polygon points="255,219 281,219 281,242 255,239"/><polygon points="283,219 315,219 315,247 283,242.5"/></g></svg>
<span style="top:174.5px;height:38px;line-height:38px;font-size:19px;color:#000;font-family:'Liberation Sans', sans-serif;font-weight:bold;left:956.0px;transform-origin:50% 50%;transform:scaleX(0.9748);">Windows(C:)</span>
<span style="top:199.5px;height:38px;line-height:38px;font-size:19px;color:#000;font-family:'Liberation Sans', sans-serif;font-weight:bold;left:989.7px;transform-origin:50% 50%;transform:scaleX(0.9172);">NTFS</span>
<span style="top:224.5px;height:38px;line-height:38px;font-size:19px;color:#000;font-family:'Liberation Sans', sans-serif;font-weight:bold;left:977.5px;transform-origin:50% 50%;transform:scaleX(0.9773);">118.0GB</span>
<svg style="left:88px;top:163px" width="44" height="30" viewBox="88 163 44 30"><polygon points="92.8,178 103.6,167 103.6,175.2 100.6,178 103.6,180.7 103.6,188.5" fill="#6fd0ff" stroke="#0033cc" stroke-width="1.3" stroke-linejoin="miter"/><polygon points="126.8,178 116.6,167.3 116.6,175 119.7,178 116.6,181 116.6,188.5" fill="#dcdcdc" stroke="#555" stroke-width="1.2"/></svg>
<svg style="left:60px;top:8px" width="28" height="28" viewBox="60 8 28 28"><defs><radialGradient id="dgg" cx="0.45" cy="0.15" r="0.9"><stop offset="0" stop-color="#ffe030"/><stop offset="0.3" stop-color="#f7a020"/><stop offset="0.7" stop-color="#f06a20"/><stop offset="1" stop-color="#e85a18"/></radialGradient></defs><path d="M62.7,10.1 H74 C80,10.5 83.8,15.5 83.8,22 C83.8,28.5 80,33.7 74,33.7 H62.7 Z" fill="url(#dgg)"/><path d="M66,16.8 H79 V19.2 H68.7 V25.3 H74.6 V27.9 H66 Z M71.9,21.1 H79 V27.9 H76.7 V23.8 H71.9 Z" fill="#f6f4d8"/></svg>
<div style="left:1688px;top:22px;width:16px;height:1px;background:#111"></div>
<div style="left:1757px;top:15px;width:15px;height:15px;border:1px solid #111;box-sizing:border-box"></div>
<svg style="left:1826px;top:14px" width="19" height="17" viewBox="1826 14 19 17"><path d="M1827.6,14.9 L1843.6,29.8 M1843.6,14.9 L1827.6,29.8" stroke="#111" stroke-width="1.2"/></svg>
<svg style="left:1876px;top:13px" width="20" height="19" viewBox="1876 13 20 19"><path d="M1878,15 L1893,30 M1893,15 L1878,30" stroke="#8a8a8a" stroke-width="1.2"/></svg>
<div style="left:1869.4px;top:74.8px;width:3.2px;height:3.2px;border-radius:50%;background:#222"></div>
<div style="left:1876.9px;top:74.8px;width:3.2px;height:3.2px;border-radius:50%;background:#222"></div>
<div style="left:1884.4px;top:74.8px;width:3.2px;height:3.2px;border-radius:50%;background:#222"></div>
<svg style="left:1900px;top:115px" width="16" height="10" viewBox="1900 115 16 10"><polygon points="1902,123.3 1907.5,117 1913,123.3" fill="#a0a0a0"/></svg>
<svg style="left:1900px;top:1003px" width="16" height="10" viewBox="1900 1003 16 10"><polygon points="1902,1005 1907.5,1011 1913,1005" fill="#606060"/></svg>
<svg style="left:24px;top:12px" width="24" height="24" viewBox="24 12 24 24"><rect x="26.5" y="14" width="19" height="19.5" rx="2.5" fill="none" stroke="#3a3a3a" stroke-width="1.6"/><rect x="26.5" y="14" width="19" height="4" fill="#3a3a3a"/><line x1="30.5" y1="18" x2="30.5" y2="33" stroke="#3a3a3a" stroke-width="1.4"/></svg>
<svg style="left:28px;top:63px" width="22" height="26" viewBox="28 63 22 26"><path d="M41.8,65.5 L31,76 L41.8,86.3 M31,76 H50" fill="none" stroke="#111" stroke-width="1.4"/></svg>
<svg style="left:64px;top:82px" width="48" height="48" viewBox="64 82 48 48"><defs><linearGradient id="sg1" x1="0" y1="0" x2="0" y2="1"><stop offset="0" stop-color="#ffffff"/><stop offset="0.25" stop-color="#d0d0d0"/><stop offset="0.3" stop-color="#555"/><stop offset="1" stop-color="#3a3a3a"/></linearGradient></defs><rect x="68.2" y="86" width="39.6" height="38.8" rx="5" fill="url(#sg1)" stroke="#555" stroke-width="1"/><rect x="74.2" y="97.3" width="28.8" height="25.6" fill="#ffffff"/><path d="M81,101 L92.5,112 L84,120 L76,112 Q73.5,109 76,106 Z" fill="#7a7a7a"/><path d="M86,105.8 L90,109.6 L82,117.6 L78,113.8 Z" fill="#b0b0b0"/><path d="M90,109.6 L103.5,122.8 L89,122.8 L82,117.6 Z" fill="#f4f4f4" stroke="#666" stroke-width="0.8"/></svg>
<svg style="left:144px;top:82px" width="48" height="48" viewBox="144 82 48 48"><circle cx="162.8" cy="101.3" r="14.3" fill="none" stroke="#3a2a20" stroke-width="3.6"/><circle cx="162.8" cy="101.3" r="14.3" fill="none" stroke="#f4a466" stroke-width="2"/><circle cx="162.8" cy="101.3" r="11.2" fill="#e6e6e6" stroke="#ffffff" stroke-width="1.3"/><path d="M175,114 L178.5,110.5 L187,119 L181.5,124.5 L173,116 Z" fill="#b84420" stroke="#5a2010" stroke-width="0.8"/><path d="M176.8,115.8 L180.5,112.2 M179,118 L182.6,114.4" stroke="#f09070" stroke-width="0.9"/></svg>
<svg style="left:214px;top:80px" width="66" height="52" viewBox="214 80 66 52"><polygon points="217.4,106 251.4,112 251.4,128.3 217.4,119.75" fill="#80552a" stroke="#2a1800" stroke-width="0.8"/><polygon points="251.4,112 276.8,106 276.8,120.9 251.4,128.3" fill="#86592c" stroke="#2a1800" stroke-width="0.8"/><polygon points="276.8,106.5 276.8,120.9 254,127.5" fill="#4a2e12"/><polygon points="217.4,106 244,101 276.8,106 251.4,112" fill="#2a1a08"/><polygon points="220,105.2 244,100.5 274,104.5 251,110.5" fill="#68c860" stroke="#333" stroke-width="0.5"/><polygon points="220,102.5 244,98 274,102 251,108" fill="#f2ea80" stroke="#555" stroke-width="0.5"/><polygon points="220,100 244,95.5 274,99.5 251,105.5" fill="#6ac85a" stroke="#333" stroke-width="0.5"/><polygon points="220,97.5 244,93.5 274,97.5 251,103" fill="#f0ec7a" stroke="#666" stroke-width="0.5"/><polygon points="248.7,83 256.3,88.8 252.2,88.8 252.2,101.4 245.3,101.4 245.3,88.8 241.3,88.8" fill="#e8141c" stroke="#801010" stroke-width="0.5"/></svg>
<svg style="left:300px;top:80px" width="52" height="52" viewBox="300 80 52 52"><defs><linearGradient id="cdg" x1="0.2" y1="0" x2="0.8" y2="1"><stop offset="0" stop-color="#7a7a7a"/><stop offset="0.35" stop-color="#c8c8c8"/><stop offset="0.45" stop-color="#ffffff"/><stop offset="0.52" stop-color="#909090"/><stop offset="1" stop-color="#6a6a6a"/></linearGradient></defs><circle cx="326" cy="105.7" r="22.4" fill="url(#cdg)" stroke="#8a8a8a" stroke-width="0.8"/><path d="M326,105.7 L348.4,105.7 A22.4,22.4 0 0 1 305.5,115 Z" fill="#7c7c7c"/><path d="M339,119 L346,126 Q348,129 344,129 L336,123 Z" fill="#6a6a6a"/><circle cx="326" cy="105" r="5.2" fill="#f0f0f0" stroke="#9a9a9a" stroke-width="0.8"/><rect x="326" y="105.7" width="6" height="5" fill="#7c7c7c"/></svg>
<svg style="left:378px;top:80px" width="54" height="52" viewBox="378 80 54 52"><polygon points="382.3,114.7 405,101 427.7,114.7 405,128.5" fill="#7a4a22" stroke="#4a2a10" stroke-width="1"/><polygon points="382.3,105.5 405,92 427.7,105.5 405,119.8" fill="#8acc82" stroke="#6aaa62" stroke-width="0.8"/><polygon points="382.3,97.5 405,84 427.7,97.5 405,111.5" fill="#1c52b4"/><polygon points="382.3,96.5 405,82.5 427.7,96.5 405,110" fill="#3686c6"/></svg>
<svg style="left:458px;top:80px" width="52" height="52" viewBox="458 80 52 52"><path d="M506.08,104.88 A22.4,22.4 0 0 0 500.24,90.80 L492.04,98.28 A11.3,11.3 0 0 1 494.99,105.39 Z" fill="#d81e2a" stroke="#9a1018" stroke-width="0.6"/><path d="M498.80,89.36 A22.4,22.4 0 0 0 484.72,83.52 L484.21,94.61 A11.3,11.3 0 0 1 491.32,97.56 Z" fill="#d81e2a" stroke="#9a1018" stroke-width="0.6"/><path d="M482.68,83.52 A22.4,22.4 0 0 0 468.60,89.36 L476.08,97.56 A11.3,11.3 0 0 1 483.19,94.61 Z" fill="#d81e2a" stroke="#9a1018" stroke-width="0.6"/><path d="M467.16,90.80 A22.4,22.4 0 0 0 461.32,104.88 L472.41,105.39 A11.3,11.3 0 0 1 475.36,98.28 Z" fill="#a6a6a6" stroke="#777" stroke-width="0.6"/><path d="M461.32,106.92 A22.4,22.4 0 0 0 467.16,121.00 L475.36,113.52 A11.3,11.3 0 0 1 472.41,106.41 Z" fill="#a6a6a6" stroke="#777" stroke-width="0.6"/><path d="M468.60,122.44 A22.4,22.4 0 0 0 482.68,128.28 L483.19,117.19 A11.3,11.3 0 0 1 476.08,114.24 Z" fill="#d81e2a" stroke="#9a1018" stroke-width="0.6"/><path d="M484.72,128.28 A22.4,22.4 0 0 0 498.80,122.44 L491.32,114.24 A11.3,11.3 0 0 1 484.21,117.19 Z" fill="#d81e2a" stroke="#9a1018" stroke-width="0.6"/><path d="M500.24,121.00 A22.4,22.4 0 0 0 506.08,106.92 L494.99,106.41 A11.3,11.3 0 0 1 492.04,113.52 Z" fill="#d81e2a" stroke="#9a1018" stroke-width="0.6"/></svg>
<svg style="left:540px;top:78px" width="46" height="54" viewBox="540 78 46 54"><polygon points="549,81 575,90.5 577.5,96.5 568,99 553,97" fill="#9ee08e" stroke="#2a4a2a" stroke-width="0.8"/><line x1="556" y1="88.5" x2="571" y2="93.5" stroke="#2a4a2a" stroke-width="0.8"/><line x1="557" y1="92.5" x2="570" y2="97" stroke="#2a4a2a" stroke-width="0.8"/><polygon points="543,94.5 583,94.5 575.7,128.7 555,128.7" fill="#3c82dc" stroke="#10305a" stroke-width="1"/><ellipse cx="563" cy="94.5" rx="20" ry="2.5" fill="#2860b0" stroke="#10305a" stroke-width="0.8"/><line x1="549.7" y1="95" x2="558.5" y2="128" stroke="#10305a" stroke-width="0.9"/><line x1="556.4" y1="95" x2="561.9" y2="128" stroke="#10305a" stroke-width="0.9"/><line x1="563.1" y1="95" x2="565.4" y2="128" stroke="#10305a" stroke-width="0.9"/><line x1="569.8" y1="95" x2="568.8" y2="128" stroke="#10305a" stroke-width="0.9"/><line x1="576.5" y1="95" x2="572.2" y2="128" stroke="#10305a" stroke-width="0.9"/><polygon points="549,81 575,90.5 577.5,96.5 568,97 553,95.5" fill="#9ee08e" stroke="#2a4a2a" stroke-width="0.8"/></svg>
<svg style="left:612px;top:74px" width="60" height="60" viewBox="612 74 60 60"><g transform="translate(0,101) scale(1,0.86) translate(0,-98.8)"><path d="M638.78,98.55 L627.81,88.32 A20.5,20.5 0 0 1 640.66,81.91 L642.23,96.83 Z" fill="#0680b0"/><path d="M638.78,95.05 L627.81,84.82 A20.5,20.5 0 0 1 640.66,78.41 L642.23,93.33 Z" fill="#08a8e0"/><path d="M642.70,96.80 L642.44,81.80 A20.5,20.5 0 0 1 658.27,88.85 L646.95,98.69 Z" fill="#004a88"/><path d="M642.70,93.30 L642.44,78.30 A20.5,20.5 0 0 1 658.27,85.35 L646.95,95.19 Z" fill="#0068b0"/><path d="M647.19,98.99 L659.17,89.96 A20.5,20.5 0 0 1 663.15,104.80 L648.26,102.97 Z" fill="#8aa848"/><path d="M647.19,95.49 L659.17,86.46 A20.5,20.5 0 0 1 663.15,101.30 L648.26,99.47 Z" fill="#b4d264"/><path d="M648.23,103.16 L663.05,105.51 A20.5,20.5 0 0 1 657.79,116.28 L646.82,106.05 Z" fill="#0a7a30"/><path d="M648.23,99.66 L663.05,102.01 A20.5,20.5 0 0 1 657.79,112.78 L646.82,102.55 Z" fill="#12a244"/><path d="M646.69,106.19 L657.30,116.80 A20.5,20.5 0 0 1 640.30,122.65 L642.13,107.76 Z" fill="#5e1a66"/><path d="M646.69,102.69 L657.30,113.30 A20.5,20.5 0 0 1 640.30,119.15 L642.13,104.26 Z" fill="#8a2c92"/><path d="M636.90,117.45 L633.75,133.64 A22,22 0 0 1 621.86,127.05 L633.93,115.80 Z" fill="#b080a8"/><path d="M636.90,113.95 L633.75,130.14 A22,22 0 0 1 621.86,123.55 L633.93,112.30 Z" fill="#d6a2cc"/><path d="M638.53,105.76 L626.87,115.20 A20.5,20.5 0 0 1 622.45,99.80 L637.34,101.63 Z" fill="#c8b828"/><path d="M638.53,102.26 L626.87,111.70 A20.5,20.5 0 0 1 622.45,96.30 L637.34,98.13 Z" fill="#f2e600"/><path d="M637.37,101.44 L622.55,99.09 A20.5,20.5 0 0 1 627.33,88.85 L638.65,98.69 Z" fill="#c07018"/><path d="M637.37,97.94 L622.55,95.59 A20.5,20.5 0 0 1 627.33,85.35 L638.65,95.19 Z" fill="#f09624"/><circle cx="642.8" cy="98.8" r="5.4" fill="#ffffff"/></g></svg>
<svg style="left:695px;top:84px" width="54" height="48" viewBox="695 84 54 48"><rect x="698.5" y="88" width="46" height="32.5" rx="3" fill="#7ccdf0" stroke="#1a5486" stroke-width="2.2"/><polygon points="705,93.3 717.5,91.8 717.5,103.8 705,103.8" fill="#fff"/><polygon points="719.5,91.5 735,89.5 735,103.8 719.5,103.8" fill="#fff"/><polygon points="705,105.5 717.5,105.5 717.5,116 705,114.8" fill="#fff"/><rect x="719.5" y="106" width="1.5" height="4" fill="#e84820"/><polygon points="723,106.5 732,106.5 732,103.5 740,109 732,114.5 732,111.5 723,111.5" fill="#e84820"/><rect x="716" y="120.5" width="11" height="4.5" fill="#1a5486"/><rect x="709.7" y="124.5" width="24.9" height="4" rx="2" fill="#1a5486"/></svg>
<div style="left:760px;top:74px;width:724px;height:78px;background:#ffffff"></div>
<div style="left:0;top:0;width:1920px;height:1080px;clip-path:inset(74px 436px 928px 760px)">
<svg style="left:1040px;top:110px" width="444" height="42" viewBox="1040 110 444 42"><defs><linearGradient id="sw" x1="0" y1="0" x2="1" y2="0"><stop offset="0" stop-color="#ffffff"/><stop offset="0.5" stop-color="#f0f0f0"/><stop offset="0.8" stop-color="#d8d8d8"/><stop offset="1" stop-color="#f4f4f4"/></linearGradient></defs><path d="M1180,152 Q1300,118 1483,112 L1483,135 Q1380,125 1300,152 Z" fill="url(#sw)"/></svg>
</div>
<div style="left:0;top:0;width:1920px;height:1080px;clip-path:inset(110px 436px 964px 1040px)">
<span style="top:66.5px;height:68px;line-height:68px;font-size:34px;color:#111;font-family:'Liberation Sans', sans-serif;font-weight:bold;left:1040px;transform-origin:0 50%;transform:scaleX(0.8193);">数据丢失怎么办？找回数据就用</span>
</div>
<div style="left:0;top:0;width:1920px;height:1080px;clip-path:inset(74px 436px 928px 760px)">
<svg style="left:840px;top:110px" width="200" height="42" viewBox="840 110 200 42"><line x1="858.0" y1="112" x2="878.0" y2="152" stroke="#a0a0a0" stroke-width="0.8"/><line x1="867.5" y1="112" x2="886.4" y2="152" stroke="#a0a0a0" stroke-width="0.8"/><line x1="877.0" y1="112" x2="894.8" y2="152" stroke="#a0a0a0" stroke-width="0.8"/><line x1="886.5" y1="112" x2="903.2" y2="152" stroke="#a0a0a0" stroke-width="0.8"/><line x1="896.0" y1="112" x2="911.6" y2="152" stroke="#a0a0a0" stroke-width="0.8"/><line x1="905.5" y1="112" x2="920.0" y2="152" stroke="#a0a0a0" stroke-width="0.8"/><line x1="915.0" y1="112" x2="928.4" y2="152" stroke="#a0a0a0" stroke-width="0.8"/><line x1="924.5" y1="112" x2="936.8" y2="152" stroke="#a0a0a0" stroke-width="0.8"/><line x1="934.0" y1="112" x2="945.2" y2="152" stroke="#a0a0a0" stroke-width="0.8"/><line x1="943.5" y1="112" x2="953.6" y2="152" stroke="#a0a0a0" stroke-width="0.8"/><line x1="953.0" y1="112" x2="962.0" y2="152" stroke="#a0a0a0" stroke-width="0.8"/><line x1="962.5" y1="112" x2="970.4" y2="152" stroke="#a0a0a0" stroke-width="0.8"/><line x1="972.0" y1="112" x2="978.8" y2="152" stroke="#a0a0a0" stroke-width="0.8"/><line x1="981.5" y1="112" x2="987.2" y2="152" stroke="#a0a0a0" stroke-width="0.8"/><line x1="991.0" y1="112" x2="995.6" y2="152" stroke="#a0a0a0" stroke-width="0.8"/></svg>
<span style="top:63.5px;height:112px;line-height:112px;font-size:56px;color:#2b2b2b;font-family:'Liberation Sans', sans-serif;font-weight:bold;left:786px;transform-origin:0 50%;transform:scaleX(0.7601);-webkit-text-stroke:2.2px #2b2b2b;letter-spacing:-2px;">DiskGenius</span>
</div>
<div style="left:0;top:0;width:1920px;height:1080px;clip-path:inset(75px 854px 969px 761px)">
<div style="left:761px;top:75px;width:40px;height:36px;background:#0a4f98"></div>
<div style="left:801px;top:75px;width:39px;height:36px;background:linear-gradient(90deg,#a03050 0%,#e24a6e 15%,#e24a6e 100%)"></div>
<div style="left:840px;top:75px;width:69px;height:36px;background:#fad42e"></div>
<div style="left:871px;top:75px;width:50px;height:4px;background:#4cb848"></div>
<div style="left:871px;top:79px;width:38px;height:6px;background:linear-gradient(180deg,#a89020,#fad42e)"></div>
<div style="left:909px;top:75px;width:12px;height:36px;background:linear-gradient(90deg,#444 0%,#aaa 35%,#fff 100%)"></div>
<div style="left:963px;top:75px;width:69px;height:36px;background:#fad42e"></div>
<div style="left:921px;top:75px;width:69px;height:29px;background:#0058a8;box-shadow:3px 4px 5px rgba(60,40,0,0.55)"></div>
<div style="left:1032px;top:75px;width:34px;height:36px;background:linear-gradient(90deg,#a03050 0%,#e24a6e 20%,#e24a6e 100%)"></div>
<span style="top:52.5px;height:78px;line-height:78px;font-size:39px;color:#ffffff;font-family:'Liberation Sans', sans-serif;font-weight:bold;left:761px;transform-origin:0 50%;">数</span>
<span style="top:44.5px;height:80px;line-height:80px;font-size:40px;color:#ffffff;font-family:'Liberation Sans', sans-serif;font-weight:bold;left:800px;transform-origin:0 50%;">据</span>
<span style="top:59.0px;height:66px;line-height:66px;font-size:33px;color:#222200;font-family:'Liberation Sans', sans-serif;left:843px;transform-origin:0 50%;">丢</span>
<span style="top:34.5px;height:76px;line-height:76px;font-size:38px;color:#ffffff;font-family:'Liberation Sans', sans-serif;font-weight:bold;left:937px;transform-origin:0 50%;">怎</span>
<span style="top:62.5px;height:60px;line-height:60px;font-size:30px;color:#222200;font-family:'Liberation Sans', sans-serif;left:996px;transform-origin:0 50%;text-shadow:1px 2px 3px rgba(80,60,0,0.6);">么</span>
<span style="top:61.5px;height:68px;line-height:68px;font-size:34px;color:#222;font-family:'Liberation Sans', sans-serif;left:1051px;transform-origin:0 50%;">!</span>
</div>
<div style="left:1066px;top:75px;width:10px;height:36px;background:linear-gradient(90deg,#777,#fff)"></div>
<div style="left:0;top:0;width:1920px;height:1080px;clip-path:inset(75px 436px 969px 1060px)">
<svg style="left:1060px;top:74px" width="240" height="38" viewBox="1060 74 240 38"><polygon points="1062.4,100.4 1105,75 1289,75 1199,103 1199,110.5 1110,110.5" fill="#b52fc0"/></svg>
<span style="top:65.5px;height:56px;line-height:56px;font-size:28px;color:#ffffff;font-family:'Liberation Sans', sans-serif;left:1102px;transform-origin:0 50%;transform-origin:0 50%;rotate:-12deg;-webkit-text-stroke:0.6px #fff;">DiskGenius  V</span>
<span style="top:65.5px;height:32px;line-height:32px;font-size:16px;color:#b830c0;font-family:'Liberation Sans', sans-serif;font-weight:bold;left:1314px;transform-origin:0 50%;transform:scaleX(1.1597);">致电: 400-008-9958</span>
<span style="top:85.0px;height:28px;line-height:28px;font-size:14px;color:#1450a8;font-family:'Liberation Sans', sans-serif;font-weight:bold;left:1326px;transform-origin:0 50%;transform:scaleX(1.0285);">或点击此处选择QQ咨询</span>
</div>
<span style="top:118.0px;height:40px;line-height:40px;font-size:20px;color:#111;font-family:'Liberation Sans', sans-serif;left:1075px;transform-origin:0 50%;transform:scaleX(1.0463);">DiskGenius 磁盘管理及数据恢复软件</span>
<svg style="left:0;top:0" width="1" height="1"><defs><linearGradient id="pgt" x1="0" y1="0" x2="1" y2="1"><stop offset="0" stop-color="#f4f4f4"/><stop offset="1" stop-color="#c4c4c4"/></linearGradient><linearGradient id="hdg" x1="0" y1="0" x2="0" y2="1"><stop offset="0" stop-color="#dcdcdc"/><stop offset="0.7" stop-color="#cfcfcf"/><stop offset="1" stop-color="#bdbdbd"/></linearGradient></defs></svg>
<div style="left:70.0px;top:327px;width:1px;height:117px;background-image:linear-gradient(180deg,#444 50%,transparent 50%);background-size:1px 2px"></div>
<div style="left:78px;top:320.0px;width:8px;height:1px;background-image:linear-gradient(90deg,#444 50%,transparent 50%);background-size:2px 1px"></div>
<div style="left:64.0px;top:314.0px;width:13px;height:13px;border:1px solid #8a8a8a;border-radius:2px;box-sizing:border-box;background:linear-gradient(180deg,#fff 0%,#f6f6f6 50%,#e4e4e4 51%,#e8e8e8 100%)"></div>
<div style="left:66.0px;top:320.0px;width:9px;height:1.2px;background:#3a50a0"></div>
<svg style="left:86px;top:309px" width="22" height="22" viewBox="86 309 22 22"><path d="M88,325 L88.5,312 Q89,309.3 92,309.3 L102,309.3 Q105,309.3 105.5,312 L106,325 Z" fill="url(#hdg)"/><path d="M95,322 Q100,318 103,311" stroke="#c2c2c2" stroke-width="1" fill="none"/><rect x="86.5" y="324.5" width="21" height="5" rx="1" fill="#2a2a2a"/><rect x="88" y="326" width="17" height="2" fill="#555"/><rect x="104" y="326" width="2" height="2" fill="#3c3"/></svg>
<div style="left:97.0px;top:331px;width:1px;height:93px;background-image:linear-gradient(180deg,#444 50%,transparent 50%);background-size:1px 2px"></div>
<div style="left:104px;top:346.0px;width:8px;height:1px;background-image:linear-gradient(90deg,#444 50%,transparent 50%);background-size:2px 1px"></div>
<div style="left:91.0px;top:340.0px;width:13px;height:13px;border:1px solid #8a8a8a;border-radius:2px;box-sizing:border-box;background:linear-gradient(180deg,#fff 0%,#f6f6f6 50%,#e4e4e4 51%,#e8e8e8 100%)"></div>
<div style="left:93.0px;top:346.0px;width:9px;height:1.2px;background:#3a50a0"></div>
<div style="left:96.9px;top:342.0px;width:1.2px;height:9px;background:#3a50a0"></div>
<svg style="left:111px;top:338.5px" width="27" height="15" viewBox="111 338.5 27 15"><polygon points="112.5,345.5 128,340.0 136,343.0 121,348.5" fill="url(#pgt)"/><polygon points="121,348.5 136,343.0 136,346.0 121,351.5" fill="#b8b8b8"/><polygon points="112.5,345.5 121,348.5 121,351.5 112.5,348.5" fill="#222"/><rect x="118.5" y="348.8" width="1.6" height="1.6" fill="#2ec040"/></svg>
<div style="left:104px;top:372.0px;width:8px;height:1px;background-image:linear-gradient(90deg,#444 50%,transparent 50%);background-size:2px 1px"></div>
<div style="left:91.0px;top:366.0px;width:13px;height:13px;border:1px solid #8a8a8a;border-radius:2px;box-sizing:border-box;background:linear-gradient(180deg,#fff 0%,#f6f6f6 50%,#e4e4e4 51%,#e8e8e8 100%)"></div>
<div style="left:93.0px;top:372.0px;width:9px;height:1.2px;background:#3a50a0"></div>
<div style="left:96.9px;top:368.0px;width:1.2px;height:9px;background:#3a50a0"></div>
<svg style="left:111px;top:364.5px" width="27" height="15" viewBox="111 364.5 27 15"><polygon points="112.5,371.5 128,366.0 136,369.0 121,374.5" fill="url(#pgt)"/><polygon points="121,374.5 136,369.0 136,372.0 121,377.5" fill="#b8b8b8"/><polygon points="112.5,371.5 121,374.5 121,377.5 112.5,374.5" fill="#222"/><rect x="118.5" y="374.8" width="1.6" height="1.6" fill="#2ec040"/></svg>
<div style="left:104px;top:398.0px;width:8px;height:1px;background-image:linear-gradient(90deg,#444 50%,transparent 50%);background-size:2px 1px"></div>
<div style="left:91.0px;top:392.0px;width:13px;height:13px;border:1px solid #8a8a8a;border-radius:2px;box-sizing:border-box;background:linear-gradient(180deg,#fff 0%,#f6f6f6 50%,#e4e4e4 51%,#e8e8e8 100%)"></div>
<div style="left:93.0px;top:398.0px;width:9px;height:1.2px;background:#3a50a0"></div>
<div style="left:96.9px;top:394.0px;width:1.2px;height:9px;background:#3a50a0"></div>
<svg style="left:111px;top:390.5px" width="27" height="15" viewBox="111 390.5 27 15"><polygon points="112.5,397.5 128,392.0 136,395.0 121,400.5" fill="url(#pgt)"/><polygon points="121,400.5 136,395.0 136,398.0 121,403.5" fill="#b8b8b8"/><polygon points="112.5,397.5 121,400.5 121,403.5 112.5,400.5" fill="#222"/><rect x="118.5" y="400.8" width="1.6" height="1.6" fill="#2ec040"/></svg>
<div style="left:104px;top:424.0px;width:8px;height:1px;background-image:linear-gradient(90deg,#444 50%,transparent 50%);background-size:2px 1px"></div>
<div style="left:91.0px;top:418.0px;width:13px;height:13px;border:1px solid #8a8a8a;border-radius:2px;box-sizing:border-box;background:linear-gradient(180deg,#fff 0%,#f6f6f6 50%,#e4e4e4 51%,#e8e8e8 100%)"></div>
<div style="left:93.0px;top:424.0px;width:9px;height:1.2px;background:#3a50a0"></div>
<div style="left:96.9px;top:420.0px;width:1.2px;height:9px;background:#3a50a0"></div>
<svg style="left:111px;top:416.5px" width="27" height="15" viewBox="111 416.5 27 15"><polygon points="112.5,423.5 128,418.0 136,421.0 121,426.5" fill="url(#pgt)"/><polygon points="121,426.5 136,421.0 136,424.0 121,429.5" fill="#b8b8b8"/><polygon points="112.5,423.5 121,426.5 121,429.5 112.5,426.5" fill="#222"/><rect x="118.5" y="426.8" width="1.6" height="1.6" fill="#2ec040"/></svg>
<div style="left:78px;top:450.0px;width:8px;height:1px;background-image:linear-gradient(90deg,#444 50%,transparent 50%);background-size:2px 1px"></div>
<div style="left:64.0px;top:444.0px;width:13px;height:13px;border:1px solid #8a8a8a;border-radius:2px;box-sizing:border-box;background:linear-gradient(180deg,#fff 0%,#f6f6f6 50%,#e4e4e4 51%,#e8e8e8 100%)"></div>
<div style="left:66.0px;top:450.0px;width:9px;height:1.2px;background:#3a50a0"></div>
<svg style="left:86px;top:439px" width="22" height="22" viewBox="86 439 22 22"><path d="M88,455 L88.5,442 Q89,439.3 92,439.3 L102,439.3 Q105,439.3 105.5,442 L106,455 Z" fill="url(#hdg)"/><path d="M95,452 Q100,448 103,441" stroke="#c2c2c2" stroke-width="1" fill="none"/><rect x="86.5" y="454.5" width="21" height="5" rx="1" fill="#2a2a2a"/><rect x="88" y="456" width="17" height="2" fill="#555"/><rect x="104" y="456" width="2" height="2" fill="#3c3"/></svg>
<div style="left:97.0px;top:461px;width:1px;height:93px;background-image:linear-gradient(180deg,#444 50%,transparent 50%);background-size:1px 2px"></div>
<div style="left:104px;top:476.0px;width:8px;height:1px;background-image:linear-gradient(90deg,#444 50%,transparent 50%);background-size:2px 1px"></div>
<div style="left:91.0px;top:470.0px;width:13px;height:13px;border:1px solid #8a8a8a;border-radius:2px;box-sizing:border-box;background:linear-gradient(180deg,#fff 0%,#f6f6f6 50%,#e4e4e4 51%,#e8e8e8 100%)"></div>
<div style="left:93.0px;top:476.0px;width:9px;height:1.2px;background:#3a50a0"></div>
<div style="left:96.9px;top:472.0px;width:1.2px;height:9px;background:#3a50a0"></div>
<svg style="left:111px;top:468.5px" width="27" height="15" viewBox="111 468.5 27 15"><polygon points="112.5,475.5 128,470.0 136,473.0 121,478.5" fill="url(#pgt)"/><polygon points="121,478.5 136,473.0 136,476.0 121,481.5" fill="#b8b8b8"/><polygon points="112.5,475.5 121,478.5 121,481.5 112.5,478.5" fill="#222"/><rect x="118.5" y="478.8" width="1.6" height="1.6" fill="#2ec040"/></svg>
<div style="left:98px;top:502.0px;width:14px;height:1px;background-image:linear-gradient(90deg,#444 50%,transparent 50%);background-size:2px 1px"></div>
<svg style="left:111px;top:494.5px" width="27" height="15" viewBox="111 494.5 27 15"><polygon points="112.5,501.5 128,496.0 136,499.0 121,504.5" fill="url(#pgt)"/><polygon points="121,504.5 136,499.0 136,502.0 121,507.5" fill="#b8b8b8"/><polygon points="112.5,501.5 121,504.5 121,507.5 112.5,504.5" fill="#222"/><rect x="118.5" y="504.8" width="1.6" height="1.6" fill="#2ec040"/></svg>
<div style="left:104px;top:528.0px;width:8px;height:1px;background-image:linear-gradient(90deg,#444 50%,transparent 50%);background-size:2px 1px"></div>
<div style="left:91.0px;top:522.0px;width:13px;height:13px;border:1px solid #8a8a8a;border-radius:2px;box-sizing:border-box;background:linear-gradient(180deg,#fff 0%,#f6f6f6 50%,#e4e4e4 51%,#e8e8e8 100%)"></div>
<div style="left:93.0px;top:528.0px;width:9px;height:1.2px;background:#3a50a0"></div>
<div style="left:96.9px;top:524.0px;width:1.2px;height:9px;background:#3a50a0"></div>
<svg style="left:111px;top:520.5px" width="27" height="15" viewBox="111 520.5 27 15"><polygon points="112.5,527.5 128,522.0 136,525.0 121,530.5" fill="url(#pgt)"/><polygon points="121,530.5 136,525.0 136,528.0 121,533.5" fill="#b8b8b8"/><polygon points="112.5,527.5 121,530.5 121,533.5 112.5,530.5" fill="#222"/><rect x="118.5" y="530.8" width="1.6" height="1.6" fill="#2ec040"/></svg>
<div style="left:104px;top:554.0px;width:8px;height:1px;background-image:linear-gradient(90deg,#444 50%,transparent 50%);background-size:2px 1px"></div>
<div style="left:91.0px;top:548.0px;width:13px;height:13px;border:1px solid #8a8a8a;border-radius:2px;box-sizing:border-box;background:linear-gradient(180deg,#fff 0%,#f6f6f6 50%,#e4e4e4 51%,#e8e8e8 100%)"></div>
<div style="left:93.0px;top:554.0px;width:9px;height:1.2px;background:#3a50a0"></div>
<div style="left:96.9px;top:550.0px;width:1.2px;height:9px;background:#3a50a0"></div>
<svg style="left:111px;top:546.5px" width="27" height="15" viewBox="111 546.5 27 15"><polygon points="112.5,553.5 128,548.0 136,551.0 121,556.5" fill="url(#pgt)"/><polygon points="121,556.5 136,551.0 136,554.0 121,559.5" fill="#b8b8b8"/><polygon points="112.5,553.5 121,556.5 121,559.5 112.5,556.5" fill="#222"/><rect x="118.5" y="556.8" width="1.6" height="1.6" fill="#2ec040"/></svg>
<svg style="left:491px;top:370.5px" width="27" height="15" viewBox="491 370.5 27 15"><polygon points="492.5,377.5 508,372.0 516,375.0 501,380.5" fill="url(#pgt)"/><polygon points="501,380.5 516,375.0 516,378.0 501,383.5" fill="#b8b8b8"/><polygon points="492.5,377.5 501,380.5 501,383.5 492.5,380.5" fill="#222"/><rect x="498.5" y="380.8" width="1.6" height="1.6" fill="#2ec040"/></svg>
<svg style="left:491px;top:398.5px" width="27" height="15" viewBox="491 398.5 27 15"><polygon points="492.5,405.5 508,400.0 516,403.0 501,408.5" fill="url(#pgt)"/><polygon points="501,408.5 516,403.0 516,406.0 501,411.5" fill="#b8b8b8"/><polygon points="492.5,405.5 501,408.5 501,411.5 492.5,408.5" fill="#222"/><rect x="498.5" y="408.8" width="1.6" height="1.6" fill="#2ec040"/></svg>
<svg style="left:491px;top:426.5px" width="27" height="15" viewBox="491 426.5 27 15"><polygon points="492.5,433.5 508,428.0 516,431.0 501,436.5" fill="url(#pgt)"/><polygon points="501,436.5 516,431.0 516,434.0 501,439.5" fill="#b8b8b8"/><polygon points="492.5,433.5 501,436.5 501,439.5 492.5,436.5" fill="#222"/><rect x="498.5" y="436.8" width="1.6" height="1.6" fill="#2ec040"/></svg>
<svg style="left:491px;top:454.5px" width="27" height="15" viewBox="491 454.5 27 15"><polygon points="492.5,461.5 508,456.0 516,459.0 501,464.5" fill="url(#pgt)"/><polygon points="501,464.5 516,459.0 516,462.0 501,467.5" fill="#b8b8b8"/><polygon points="492.5,461.5 501,464.5 501,467.5 492.5,464.5" fill="#222"/><rect x="498.5" y="464.8" width="1.6" height="1.6" fill="#2ec040"/></svg>
<svg style="left:60px;top:956px" width="16" height="20" viewBox="60 956 16 20"><polyline points="71.5,961.5 65.5,966 71.5,970.5" fill="none" stroke="#606060" stroke-width="2.2"/></svg>
<svg style="left:440px;top:956px" width="16" height="20" viewBox="440 956 16 20"><polyline points="444,961.5 450,966 444,970.5" fill="none" stroke="#606060" stroke-width="2.2"/></svg>
<div style="left:1865px;top:1004px;width:3px;height:3px;background:#c4c4c4"></div>
<div style="left:1865px;top:1000px;width:3px;height:3px;background:#c4c4c4"></div>
<div style="left:1865px;top:996px;width:3px;height:3px;background:#c4c4c4"></div>
<div style="left:1861px;top:1004px;width:3px;height:3px;background:#c4c4c4"></div>
<div style="left:1861px;top:1000px;width:3px;height:3px;background:#c4c4c4"></div>
<div style="left:1857px;top:1004px;width:3px;height:3px;background:#c4c4c4"></div>
<svg style="left:20px;top:1034px" width="32" height="32" viewBox="20 1034 32 32"><g fill="#ffffff"><polygon points="24,1039.6 34.8,1038.2 34.8,1049.2 24,1049.2"/><polygon points="36.6,1037.9 48.2,1036.5 48.2,1049.2 36.6,1049.2"/><polygon points="24,1050.8 34.8,1050.8 34.8,1061.6 24,1060.3"/><polygon points="36.6,1050.8 48.2,1050.8 48.2,1063.2 36.6,1061.9"/></g></svg>
<svg style="left:92px;top:1032px" width="34" height="34" viewBox="92 1032 34 34"><circle cx="111.2" cy="1044.5" r="8.6" fill="none" stroke="#fff" stroke-width="1.6"/><line x1="105" y1="1050.8" x2="96.5" y2="1061.8" stroke="#fff" stroke-width="1.7"/></svg>
<svg style="left:166px;top:1036px" width="28" height="28" viewBox="166 1036 28 28"><circle cx="180" cy="1050" r="10" fill="none" stroke="#fff" stroke-width="3"/></svg>
<svg style="left:236px;top:1034px" width="32" height="32" viewBox="236 1034 32 32"><g fill="none" stroke="#fff" stroke-width="1.6"><rect x="240.8" y="1043" width="15.5" height="12"/><line x1="240" y1="1038.3" x2="257" y2="1038.3"/><line x1="240" y1="1059.8" x2="257" y2="1059.8"/><line x1="240.8" y1="1038" x2="240.8" y2="1041"/><line x1="256.3" y1="1038" x2="256.3" y2="1041"/><line x1="240.8" y1="1057" x2="240.8" y2="1060"/><line x1="256.3" y1="1057" x2="256.3" y2="1060"/><line x1="262.5" y1="1037.5" x2="262.5" y2="1060.5"/></g><rect x="261" y="1044.5" width="3" height="3" fill="#fff"/></svg>
<svg style="left:316px;top:1030px" width="28" height="40" viewBox="316 1030 28 40"><defs><linearGradient id="sblue" x1="0" y1="0" x2="1" y2="1"><stop offset="0" stop-color="#5ac8fa"/><stop offset="1" stop-color="#2a5ae8"/></linearGradient></defs><path d="M336.5,1032.5 L322,1048 L332,1054 L321,1067.5 L337.5,1053 L327.5,1047 Z" fill="url(#sblue)"/></svg>
<svg style="left:384px;top:1030px" width="40" height="40" viewBox="384 1030 40 40"><rect x="386.5" y="1038" width="34.5" height="29.5" rx="3.5" fill="#f4f4f4"/><path d="M394,1040 V1034.5 H413.5 V1040" fill="none" stroke="#29a8e0" stroke-width="2"/><rect x="396.5" y="1044.5" width="6.5" height="6.5" fill="#f25022"/><rect x="404" y="1044.5" width="6.5" height="6.5" fill="#7fba00"/><rect x="396.5" y="1052" width="6.5" height="6.5" fill="#00a4ef"/><rect x="404" y="1052" width="6.5" height="6.5" fill="#ffb900"/></svg>
<svg style="left:460px;top:1032px" width="38" height="36" viewBox="460 1032 38 36"><rect x="474" y="1038" width="20.5" height="24" fill="#fff" stroke="#2b579a" stroke-width="1.5"/><line x1="480" y1="1041.5" x2="492" y2="1041.5" stroke="#2b579a" stroke-width="1.4"/><line x1="480" y1="1044.7" x2="492" y2="1044.7" stroke="#2b579a" stroke-width="1.4"/><line x1="480" y1="1047.9" x2="492" y2="1047.9" stroke="#2b579a" stroke-width="1.4"/><line x1="480" y1="1051.1" x2="492" y2="1051.1" stroke="#2b579a" stroke-width="1.4"/><line x1="480" y1="1054.3" x2="492" y2="1054.3" stroke="#2b579a" stroke-width="1.4"/><line x1="480" y1="1057.5" x2="492" y2="1057.5" stroke="#2b579a" stroke-width="1.4"/><line x1="480" y1="1060.7" x2="492" y2="1060.7" stroke="#2b579a" stroke-width="1.4"/><polygon points="463,1037.5 482,1034 482,1065.5 463,1062" fill="#2b579a"/><text x="466.2" y="1055.5" font-family="Liberation Sans" font-weight="bold" font-size="12" fill="#fff">W</text></svg>
<svg style="left:535px;top:1033px" width="38" height="34" viewBox="535 1033 38 34"><path d="M538,1037.5 H549 L552,1040 H570 V1063 H538 Z" fill="#e8a820"/><rect x="538" y="1042" width="32" height="21" fill="#f8d060"/><path d="M546,1063 V1052 H562 V1063 H557.5 V1056 H550.5 V1063 Z" fill="#2a88d8"/></svg>
<svg style="left:608px;top:1028px" width="44" height="44" viewBox="608 1028 44 44"><defs><linearGradient id="g360" x1="0" y1="0" x2="0" y2="1"><stop offset="0" stop-color="#8ee040"/><stop offset="1" stop-color="#3ab020"/></linearGradient></defs><circle cx="629" cy="1050" r="15.5" fill="#fff"/><circle cx="629" cy="1050" r="13.5" fill="url(#g360)"/><text x="629" y="1058.5" text-anchor="middle" font-family="Liberation Sans" font-weight="bold" font-size="25" fill="#fff">e</text><path d="M615,1063.5 Q611,1058 614.5,1052" fill="none" stroke="#5cc83a" stroke-width="1.8"/><path d="M634,1036.5 Q642,1033 645.5,1036.5" fill="none" stroke="#5cc83a" stroke-width="1.8"/></svg>
<svg style="left:683px;top:1030px" width="42" height="40" viewBox="683 1030 42 40"><defs><linearGradient id="edg" x1="0.1" y1="0.9" x2="0.5" y2="0.1"><stop offset="0" stop-color="#0d4fa0"/><stop offset="0.55" stop-color="#1a8ad8"/><stop offset="1" stop-color="#30c0ec"/></linearGradient><linearGradient id="edg2" x1="0" y1="0" x2="1" y2="1"><stop offset="0" stop-color="#2cc0e8"/><stop offset="0.5" stop-color="#40d0a0"/><stop offset="1" stop-color="#6ede5a"/></linearGradient></defs><circle cx="704" cy="1050" r="17.2" fill="url(#edg)"/><path d="M687,1049 Q688,1033 704.5,1033 Q721.2,1033 721.2,1050 Q721.2,1056 715,1056 Q709,1056 708.5,1050 Q708,1045.5 703,1045.5 Q695,1046 693.5,1052 Q691.5,1045 687,1049 Z" fill="url(#edg2)"/><path d="M694,1053 Q696,1064 707,1065 Q716,1065 720.5,1058 Q714,1061 708.5,1058 Q703,1055 703.5,1048 Q697,1048.5 694,1053 Z" fill="#0c4a96"/></svg>
<svg style="left:760px;top:1030px" width="38" height="40" viewBox="760 1030 38 40"><g transform="translate(762,1032) scale(1.59,1.505) translate(-62.7,-10.1)"><path d="M62.7,10.1 H74 C80,10.5 83.8,15.5 83.8,22 C83.8,28.5 80,33.7 74,33.7 H62.7 Z" fill="url(#dgg)"/><path d="M66,16.8 H79 V19.2 H68.7 V25.3 H74.6 V27.9 H66 Z M71.9,21.1 H79 V27.9 H76.7 V23.8 H71.9 Z" fill="#f6f4d8"/></g></svg>
<svg style="left:1320px;top:1040px" width="24" height="16" viewBox="1320 1040 24 16"><polyline points="1323,1053.5 1332,1044.5 1341,1053.5" fill="none" stroke="#fff" stroke-width="1.5"/></svg>
<svg style="left:1352px;top:1038px" width="32" height="26" viewBox="1352 1038 32 26"><rect x="1356" y="1046" width="24" height="12" rx="2" fill="#c8c8c8"/><rect x="1360" y="1042" width="16" height="5" fill="#e8e8e8"/><rect x="1358" y="1056" width="20" height="4" fill="#9a9a9a"/><polyline points="1365,1052 1370,1058 1381,1045" fill="none" stroke="#2ab82a" stroke-width="3"/></svg>
<svg style="left:1390px;top:1036px" width="28" height="28" viewBox="1390 1036 28 28"><circle cx="1404" cy="1050" r="12" fill="#3a8ef0"/><path d="M1397,1045 L1411,1043 L1406,1049 L1409,1050 L1402,1057 L1403,1051 L1399,1050 Z" fill="#fff"/></svg>
<svg style="left:1426px;top:1036px" width="28" height="28" viewBox="1426 1036 28 28"><rect x="1427.5" y="1038" width="24.5" height="24" fill="#111"/><path d="M1431,1051 Q1439.5,1042 1448,1051 Q1439.5,1058 1431,1051 Z" fill="none" stroke="#76b900" stroke-width="2.2"/><circle cx="1440" cy="1050.5" r="2.5" fill="#76b900"/></svg>
<svg style="left:1462px;top:1036px" width="28" height="28" viewBox="1462 1036 28 28"><rect x="1464" y="1038" width="24" height="24" rx="2" fill="#3aa0e0" stroke="#a0d8f8" stroke-width="1.2"/><rect x="1467" y="1041" width="14" height="10" fill="none" stroke="#fff" stroke-width="1.2"/><path d="M1464,1062 L1471,1053 L1471,1062 Z" fill="#e8c030"/><ellipse cx="1481" cy="1056" rx="5" ry="3.2" fill="none" stroke="#fff" stroke-width="1"/></svg>
<svg style="left:1498px;top:1036px" width="28" height="28" viewBox="1498 1036 28 28"><path d="M1500,1041 L1511.5,1037.5 L1523,1041 V1050 Q1523,1058 1511.5,1062 Q1500,1058 1500,1050 Z" fill="#fff"/><path d="M1511.5,1038 V1061 M1500.5,1049.5 H1522.5" stroke="#222" stroke-width="1.5"/><circle cx="1518" cy="1056.5" r="6" fill="#e81123"/><path d="M1515.5,1054 L1520.5,1059 M1520.5,1054 L1515.5,1059" stroke="#fff" stroke-width="1.4"/></svg>
<svg style="left:1534px;top:1036px" width="28" height="28" viewBox="1534 1036 28 28"><rect x="1535.7" y="1038" width="24.3" height="24" fill="#1a62d8"/><g stroke="#fff" stroke-width="1.8"><line x1="1548" y1="1041" x2="1548" y2="1059"/><line x1="1540.2" y1="1045.5" x2="1555.8" y2="1054.5"/><line x1="1540.2" y1="1054.5" x2="1555.8" y2="1045.5"/></g></svg>
<svg style="left:1570px;top:1040px" width="28" height="20" viewBox="1570 1040 28 20"><rect x="1578" y="1045" width="16" height="11" fill="none" stroke="#fff" stroke-width="1.5"/><rect x="1580" y="1047" width="12" height="7" fill="#fff"/><path d="M1573,1043 V1048 Q1573,1051 1577,1051 H1578 M1572,1043 H1576" fill="none" stroke="#fff" stroke-width="1.3"/></svg>
<svg style="left:1606px;top:1038px" width="28" height="24" viewBox="1606 1038 28 24"><path d="M1609,1046 H1613 L1618,1041 V1059 L1613,1054 H1609 Z" fill="none" stroke="#fff" stroke-width="1.3"/><path d="M1622,1046 Q1624,1050 1622,1054 M1625,1043 Q1629,1050 1625,1057 M1628,1040 Q1634,1050 1628,1060" fill="none" stroke="#fff" stroke-width="1.3"/></svg>
<span style="top:1027.0px;height:46px;line-height:46px;font-size:23px;color:#ffffff;font-family:'Liberation Sans', sans-serif;left:1642.5px;transform-origin:50% 50%;">中</span>
<svg style="left:1684px;top:1036px" width="28" height="28" viewBox="1684 1036 28 28"><path d="M1688,1040 L1708,1038 L1711,1058 L1690,1062 Z" fill="#f05a24"/><path d="M1704,1043 Q1696,1041 1694,1046 Q1694,1049 1700,1050 Q1706,1051 1705,1055 Q1703,1059 1694,1057" fill="none" stroke="#fff" stroke-width="3"/></svg>
<svg style="left:1854px;top:1034px" width="42" height="42" viewBox="1854 1034 42 42"><path d="M1857.8,1037.7 H1882 V1057 H1864.5 L1869.5,1062 L1864,1062 L1857.8,1057 Z" fill="#fff"/><path d="M1863,1043.5 H1877 M1863,1047.5 H1877 M1863,1051.5 H1872" stroke="#222" stroke-width="1"/><circle cx="1881.5" cy="1061.4" r="11.8" fill="#2b2c30" stroke="#8a8a8a" stroke-width="1"/><text x="1881.5" y="1067.5" text-anchor="middle" font-family="Liberation Sans" font-weight="bold" font-size="17" fill="#fff">2</text></svg>
<div style="left:1766px;top:756px;width:52px;height:54px;background:#444;border-radius:14px"></div>
<div style="left:1776px;top:766px;width:144px;height:112px;background:#fff;border:1.5px dashed #888;border-radius:10px;box-sizing:border-box"></div>
<span style="top:761.2px;height:42px;line-height:42px;font-size:21px;color:#444;font-family:'Liberation Sans', sans-serif;font-weight:bold;left:1791.5px;transform-origin:50% 50%;-webkit-text-stroke:1.3px #444;">中</span>
<span style="top:787.5px;height:42px;line-height:42px;font-size:21px;color:#444;font-family:'Liberation Sans', sans-serif;font-weight:bold;left:1791.5px;transform-origin:50% 50%;-webkit-text-stroke:1.3px #444;">简</span>
<span style="top:814.5px;height:42px;line-height:42px;font-size:21px;color:#444;font-family:'Liberation Sans', sans-serif;font-weight:bold;left:1791.5px;transform-origin:50% 50%;-webkit-text-stroke:1.3px #444;">半</span>
<svg style="left:1790px;top:848px" width="26" height="22" viewBox="1790 848 26 22"><path d="M1802.5,867 L1794,859 Q1790,855 1793,851.5 Q1797,848.5 1802.5,853 Q1808,848.5 1812,851.5 Q1815,855 1811,859 Z" fill="#444"/></svg>
<svg style="left:1840px;top:775px" width="80" height="100" viewBox="1840 775 80 100"><path d="M1848,808 Q1850,781 1876,779 Q1903,780 1905,808" fill="#111"/><circle cx="1908" cy="804" r="4.5" fill="#111"/><circle cx="1876" cy="808" r="24" fill="#fff" stroke="#111" stroke-width="2.2"/><path d="M1850,800 Q1860,784 1876,786 L1879,793 Q1889,785 1902,802 Q1898,784 1876,780 Q1853,782 1850,800 Z" fill="#111"/><path d="M1861,804 L1869,803 M1881,803 L1889,805" stroke="#111" stroke-width="1.6"/><circle cx="1864" cy="809" r="1.3" fill="#111"/><circle cx="1885" cy="809" r="1.3" fill="#111"/><line x1="1870" y1="819" x2="1881" y2="819" stroke="#111" stroke-width="1.6"/><path d="M1862,830 L1859,848 Q1860,852 1866,852 L1889,852 Q1893,851 1893,847 L1890,830" fill="#fff" stroke="#111" stroke-width="2"/><path d="M1863,852 L1864,868 Q1868,871 1870,868 L1872,856 L1880,856 L1882,868 Q1885,871 1888,868 L1890,852" fill="#fff" stroke="#111" stroke-width="2"/></svg>
</body></html>
